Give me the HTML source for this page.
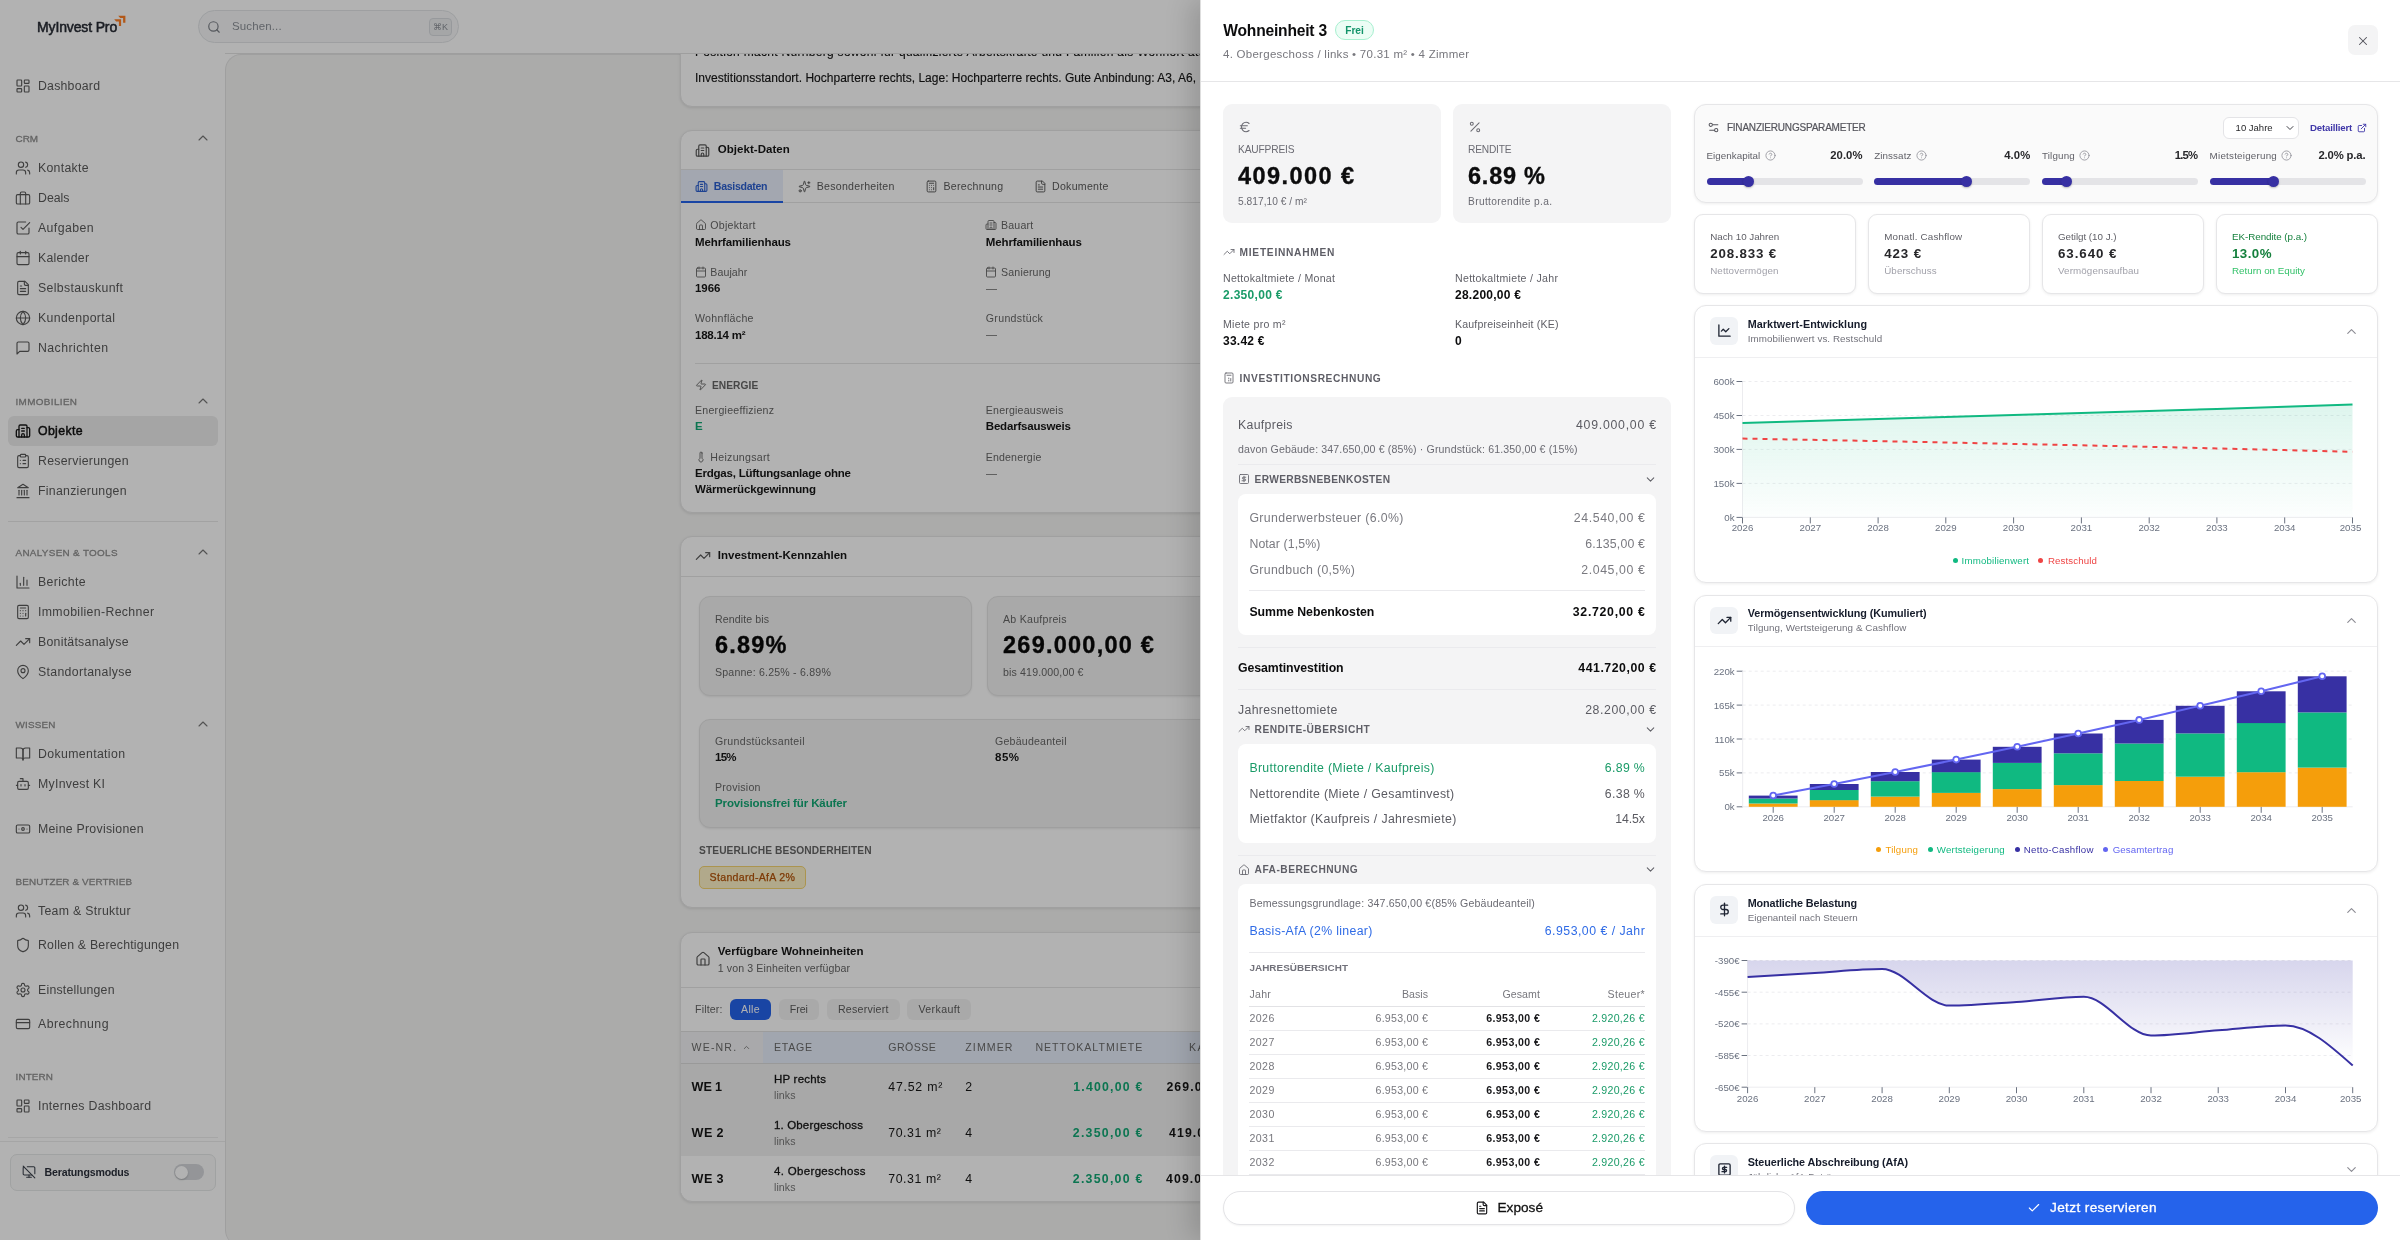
<!DOCTYPE html>
<html lang="de"><head><meta charset="utf-8"><title>MyInvest Pro – Wohneinheit 3</title><style>
html,body{margin:0;padding:0;}
body{width:2400px;height:1240px;overflow:hidden;background:#fff;font-family:"Liberation Sans", sans-serif;}
#app{position:relative;width:2400px;height:1240px;overflow:hidden;will-change:transform;}
.b{position:absolute;box-sizing:border-box;}
.t{position:absolute;white-space:nowrap;}
.i{position:absolute;display:block;}
svg text{font-family:"Liberation Sans", sans-serif;}
</style></head><body><div id="app">
<div id="bgpage" class="b" style="left:0;top:0;width:2400px;height:1240px;background:#fff;filter:blur(0.4px);">
<div class="b" style="left:225px;top:53.5px;width:2175px;height:1192px;background:#f5f5f4;border-radius:16px 0 0 16px;border-left:1px solid #e4e4e4;border-top:1px solid #e4e4e4;"></div>
<div class="b" style="left:679.5px;top:-40px;width:1500px;height:146.5px;background:#fff;border:1px solid #e6e6e6;border-radius:12px;box-shadow:0 1px 3px rgba(0,0,0,.10);"></div>
<span class="t" id="t0" style="top:43.2px;font-size:12px;line-height:18px;color:#161616;left:695px;letter-spacing:0.3px;-webkit-text-stroke:0.15px #161616;">Position macht Nürnberg sowohl für qualifizierte Arbeitskräfte und Familien als Wohnort attraktiv und sichert</span>
<span class="t" id="t1" style="top:69px;font-size:12px;line-height:18px;color:#161616;left:695px;letter-spacing:0.015px;-webkit-text-stroke:0.15px #161616;">Investitionsstandort. Hochparterre rechts, Lage: Hochparterre rechts. Gute Anbindung: A3, A6,</span>
<div class="b" style="left:679.5px;top:130px;width:1500px;height:383px;background:#fff;border:1px solid #e6e6e6;border-radius:12px;box-shadow:0 1px 3px rgba(0,0,0,.10);"></div>
<svg class="i" style="left:694.6px;top:142.7px;" width="15" height="15" viewBox="0 0 24 24" fill="none" stroke="#5b5b5b" stroke-width="1.9" stroke-linecap="round" stroke-linejoin="round"><path d="M10 12h4"/><path d="M10 8h4"/><path d="M14 21v-3a2 2 0 0 0-4 0v3"/><path d="M6 10H4a2 2 0 0 0-2 2v7a2 2 0 0 0 2 2h16a2 2 0 0 0 2-2V9a2 2 0 0 0-2-2h-2"/><path d="M6 21V5a2 2 0 0 1 2-2h8a2 2 0 0 1 2 2v16"/></svg>
<span class="t" id="t2" style="top:140.5px;font-size:11.5px;line-height:17px;color:#161616;font-weight:700;left:717.8px;letter-spacing:0.038px;">Objekt-Daten</span>
<div class="b" style="left:681px;top:169px;width:1499px;height:1px;background:#e6e6e6;"></div>
<div class="b" style="left:680.5px;top:170px;width:102.5px;height:33px;background:#eaf0fc;"></div>
<div class="b" style="left:681px;top:201px;width:102px;height:2px;background:#2563eb;"></div>
<div class="b" style="left:783px;top:202px;width:1397px;height:1px;background:#e6e6e6;"></div>
<svg class="i" style="left:694.5px;top:179.5px;" width="13" height="13" viewBox="0 0 24 24" fill="none" stroke="#2b5fd0" stroke-width="2" stroke-linecap="round" stroke-linejoin="round"><path d="M10 12h4"/><path d="M10 8h4"/><path d="M14 21v-3a2 2 0 0 0-4 0v3"/><path d="M6 10H4a2 2 0 0 0-2 2v7a2 2 0 0 0 2 2h16a2 2 0 0 0 2-2V9a2 2 0 0 0-2-2h-2"/><path d="M6 21V5a2 2 0 0 1 2-2h8a2 2 0 0 1 2 2v16"/></svg>
<span class="t" id="t3" style="top:178px;font-size:10.6px;line-height:16px;color:#2b5fd0;font-weight:700;left:713.8px;letter-spacing:-0.303px;">Basisdaten</span>
<svg class="i" style="left:798px;top:179.5px;" width="13" height="13" viewBox="0 0 24 24" fill="none" stroke="#5b5b5b" stroke-width="1.8" stroke-linecap="round" stroke-linejoin="round"><path d="M9.937 15.5A2 2 0 0 0 8.5 14.063l-6.135-1.582a.5.5 0 0 1 0-.962L8.5 9.936A2 2 0 0 0 9.937 8.5l1.582-6.135a.5.5 0 0 1 .963 0L14.063 8.5A2 2 0 0 0 15.5 9.937l6.135 1.581a.5.5 0 0 1 0 .964L15.5 14.063a2 2 0 0 0-1.437 1.437l-1.582 6.135a.5.5 0 0 1-.963 0z"/><path d="M20 3v4"/><path d="M22 5h-4"/><circle cx="4" cy="20" r="2"/></svg>
<span class="t" id="t4" style="top:178px;font-size:10.6px;line-height:16px;color:#5b5b5b;left:816.7px;letter-spacing:0.268px;">Besonderheiten</span>
<svg class="i" style="left:925px;top:179.5px;" width="13" height="13" viewBox="0 0 24 24" fill="none" stroke="#5b5b5b" stroke-width="1.8" stroke-linecap="round" stroke-linejoin="round"><rect width="16" height="20" x="4" y="2" rx="2"/><line x1="8" x2="16" y1="6" y2="6"/><line x1="16" x2="16" y1="14" y2="18"/><path d="M16 10h.01"/><path d="M12 10h.01"/><path d="M8 10h.01"/><path d="M12 14h.01"/><path d="M8 14h.01"/><path d="M12 18h.01"/><path d="M8 18h.01"/></svg>
<span class="t" id="t5" style="top:178px;font-size:10.6px;line-height:16px;color:#5b5b5b;left:943.5px;letter-spacing:0.284px;">Berechnung</span>
<svg class="i" style="left:1034px;top:179.5px;" width="13" height="13" viewBox="0 0 24 24" fill="none" stroke="#5b5b5b" stroke-width="1.8" stroke-linecap="round" stroke-linejoin="round"><path d="M15 2H6a2 2 0 0 0-2 2v16a2 2 0 0 0 2 2h12a2 2 0 0 0 2-2V7Z"/><path d="M14 2v4a2 2 0 0 0 2 2h4"/><path d="M10 9H8"/><path d="M16 13H8"/><path d="M16 17H8"/></svg>
<span class="t" id="t6" style="top:178px;font-size:10.6px;line-height:16px;color:#5b5b5b;left:1052px;letter-spacing:0.277px;">Dokumente</span>
<svg class="i" style="left:694.5px;top:219.3px;" width="12" height="12" viewBox="0 0 24 24" fill="none" stroke="#666" stroke-width="1.8" stroke-linecap="round" stroke-linejoin="round"><path d="M15 21v-8a1 1 0 0 0-1-1h-4a1 1 0 0 0-1 1v8"/><path d="M3 10a2 2 0 0 1 .709-1.528l7-5.999a2 2 0 0 1 2.582 0l7 5.999A2 2 0 0 1 21 10v9a2 2 0 0 1-2 2H5a2 2 0 0 1-2-2z"/></svg>
<span class="t" id="t7" style="top:217.3px;font-size:10.6px;line-height:16px;color:#666;left:710.3px;letter-spacing:0.264px;">Objektart</span>
<span class="t" id="t8" style="top:233.6px;font-size:11.5px;line-height:17px;color:#161616;font-weight:700;left:695px;letter-spacing:-0.119px;">Mehrfamilienhaus</span>
<svg class="i" style="left:985.3px;top:219.3px;" width="12" height="12" viewBox="0 0 24 24" fill="none" stroke="#666" stroke-width="1.8" stroke-linecap="round" stroke-linejoin="round"><path d="M10 12h4"/><path d="M10 8h4"/><path d="M14 21v-3a2 2 0 0 0-4 0v3"/><path d="M6 10H4a2 2 0 0 0-2 2v7a2 2 0 0 0 2 2h16a2 2 0 0 0 2-2V9a2 2 0 0 0-2-2h-2"/><path d="M6 21V5a2 2 0 0 1 2-2h8a2 2 0 0 1 2 2v16"/></svg>
<span class="t" id="t9" style="top:217.3px;font-size:10.6px;line-height:16px;color:#666;left:1001.1px;letter-spacing:0.156px;">Bauart</span>
<span class="t" id="t10" style="top:233.6px;font-size:11.5px;line-height:17px;color:#161616;font-weight:700;left:985.8px;letter-spacing:-0.119px;">Mehrfamilienhaus</span>
<svg class="i" style="left:694.5px;top:265.6px;" width="12" height="12" viewBox="0 0 24 24" fill="none" stroke="#666" stroke-width="1.8" stroke-linecap="round" stroke-linejoin="round"><path d="M8 2v4"/><path d="M16 2v4"/><rect width="18" height="18" x="3" y="4" rx="2"/><path d="M3 10h18"/></svg>
<span class="t" id="t11" style="top:263.6px;font-size:10.6px;line-height:16px;color:#666;left:710.3px;letter-spacing:0.081px;">Baujahr</span>
<span class="t" id="t12" style="top:279.9px;font-size:11.5px;line-height:17px;color:#161616;font-weight:700;left:695px;letter-spacing:-0.031px;">1966</span>
<svg class="i" style="left:985.3px;top:265.6px;" width="12" height="12" viewBox="0 0 24 24" fill="none" stroke="#666" stroke-width="1.8" stroke-linecap="round" stroke-linejoin="round"><path d="M8 2v4"/><path d="M16 2v4"/><rect width="18" height="18" x="3" y="4" rx="2"/><path d="M3 10h18"/></svg>
<span class="t" id="t13" style="top:263.6px;font-size:10.6px;line-height:16px;color:#666;left:1001.1px;letter-spacing:0.148px;">Sanierung</span>
<div class="b" style="left:985.8px;top:288.6px;width:11px;height:1px;background:#8a8a8a;"></div>
<span class="t" id="t14" style="top:310.2px;font-size:10.6px;line-height:16px;color:#666;left:695px;letter-spacing:0.304px;">Wohnfläche</span>
<span class="t" id="t15" style="top:326.5px;font-size:11.5px;line-height:17px;color:#161616;font-weight:700;left:695px;letter-spacing:-0.242px;">188.14 m²</span>
<span class="t" id="t16" style="top:310.2px;font-size:10.6px;line-height:16px;color:#666;left:985.8px;letter-spacing:0.314px;">Grundstück</span>
<div class="b" style="left:985.8px;top:335.2px;width:11px;height:1px;background:#8a8a8a;"></div>
<div class="b" style="left:695px;top:362.5px;width:1485px;height:1px;background:#e6e6e6;"></div>
<svg class="i" style="left:694.5px;top:379px;" width="12" height="12" viewBox="0 0 24 24" fill="none" stroke="#666" stroke-width="1.8" stroke-linecap="round" stroke-linejoin="round"><path d="M4 14a1 1 0 0 1-.78-1.63l9.9-10.2a.5.5 0 0 1 .86.46l-1.92 6.02A1 1 0 0 0 13 10h7a1 1 0 0 1 .78 1.63l-9.9 10.2a.5.5 0 0 1-.86-.46l1.92-6.02A1 1 0 0 0 11 14z"/></svg>
<span class="t" id="t17" style="top:377.5px;font-size:10.2px;line-height:15px;color:#666;font-weight:700;left:712px;letter-spacing:0.057px;">ENERGIE</span>
<span class="t" id="t18" style="top:402px;font-size:10.6px;line-height:16px;color:#666;left:695px;letter-spacing:0.254px;">Energieeffizienz</span>
<span class="t" id="t19" style="top:418.3px;font-size:11.5px;line-height:17px;color:#12a874;font-weight:700;left:695px;">E</span>
<span class="t" id="t20" style="top:402px;font-size:10.6px;line-height:16px;color:#666;left:985.8px;letter-spacing:0.200px;">Energieausweis</span>
<span class="t" id="t21" style="top:418.3px;font-size:11.5px;line-height:17px;color:#161616;font-weight:700;left:985.8px;letter-spacing:-0.198px;">Bedarfsausweis</span>
<svg class="i" style="left:694.5px;top:450.7px;" width="12" height="12" viewBox="0 0 24 24" fill="none" stroke="#666" stroke-width="1.8" stroke-linecap="round" stroke-linejoin="round"><path d="M14 4v10.54a4 4 0 1 1-4 0V4a2 2 0 0 1 4 0Z"/></svg>
<span class="t" id="t22" style="top:448.7px;font-size:10.6px;line-height:16px;color:#666;left:710.3px;letter-spacing:0.297px;">Heizungsart</span>
<span class="t" id="t23" style="top:465px;font-size:11.5px;line-height:17px;color:#161616;font-weight:700;left:695px;letter-spacing:-0.218px;">Erdgas, Lüftungsanlage ohne</span>
<span class="t" id="t24" style="top:480.5px;font-size:11.5px;line-height:17px;color:#161616;font-weight:700;left:695px;letter-spacing:-0.137px;">Wärmerückgewinnung</span>
<span class="t" id="t25" style="top:448.7px;font-size:10.6px;line-height:16px;color:#666;left:985.8px;letter-spacing:0.144px;">Endenergie</span>
<div class="b" style="left:985.8px;top:473.7px;width:11px;height:1px;background:#8a8a8a;"></div>
<div class="b" style="left:679.5px;top:536px;width:1500px;height:372px;background:#fff;border:1px solid #e6e6e6;border-radius:12px;box-shadow:0 1px 3px rgba(0,0,0,.10);"></div>
<svg class="i" style="left:695px;top:548px;" width="16" height="16" viewBox="0 0 24 24" fill="none" stroke="#5b5b5b" stroke-width="1.8" stroke-linecap="round" stroke-linejoin="round"><polyline points="22 7 13.5 15.5 8.5 10.5 2 17"/><polyline points="16 7 22 7 22 13"/></svg>
<span class="t" id="t26" style="top:547.1px;font-size:11.5px;line-height:17px;color:#161616;font-weight:700;left:717.8px;letter-spacing:0.011px;">Investment-Kennzahlen</span>
<div class="b" style="left:681px;top:576px;width:1499px;height:1px;background:#e6e6e6;"></div>
<div class="b" style="left:699px;top:595.5px;width:272.5px;height:100px;background:#f3f3f3;border:1px solid #e4e4e4;border-radius:11px;box-shadow:0 1px 2px rgba(0,0,0,.08);"></div>
<div class="b" style="left:987px;top:595.5px;width:272.5px;height:100px;background:#f3f3f3;border:1px solid #e4e4e4;border-radius:11px;box-shadow:0 1px 2px rgba(0,0,0,.08);"></div>
<span class="t" id="t27" style="top:610.7px;font-size:10.6px;line-height:16px;color:#666;left:715px;letter-spacing:0.100px;">Rendite bis</span>
<span class="t" id="t28" style="top:627.9px;font-size:23.5px;line-height:35px;color:#0a0a0a;font-weight:700;left:715px;letter-spacing:1.165px;-webkit-text-stroke:0.35px #0a0a0a;">6.89%</span>
<span class="t" id="t29" style="top:663.8px;font-size:10.6px;line-height:16px;color:#666;left:715px;letter-spacing:0.195px;">Spanne: 6.25% - 6.89%</span>
<span class="t" id="t30" style="top:610.7px;font-size:10.6px;line-height:16px;color:#666;left:1003px;letter-spacing:0.259px;">Ab Kaufpreis</span>
<span class="t" id="t31" style="top:627.9px;font-size:23.5px;line-height:35px;color:#0a0a0a;font-weight:700;left:1003px;letter-spacing:1.244px;-webkit-text-stroke:0.35px #0a0a0a;">269.000,00 €</span>
<span class="t" id="t32" style="top:663.8px;font-size:10.6px;line-height:16px;color:#666;left:1003px;letter-spacing:0.144px;">bis 419.000,00 €</span>
<div class="b" style="left:699px;top:718.5px;width:1400px;height:109px;background:#f3f3f3;border:1px solid #e4e4e4;border-radius:11px;box-shadow:0 1px 2px rgba(0,0,0,.08);"></div>
<span class="t" id="t33" style="top:732.8px;font-size:10.6px;line-height:16px;color:#666;left:715px;letter-spacing:0.294px;">Grundstücksanteil</span>
<span class="t" id="t34" style="top:748.7px;font-size:11.5px;line-height:17px;color:#161616;font-weight:700;left:715px;letter-spacing:-0.766px;">15%</span>
<span class="t" id="t35" style="top:732.8px;font-size:10.6px;line-height:16px;color:#666;left:995px;letter-spacing:0.215px;">Gebäudeanteil</span>
<span class="t" id="t36" style="top:748.7px;font-size:11.5px;line-height:17px;color:#161616;font-weight:700;left:995px;letter-spacing:0.484px;">85%</span>
<span class="t" id="t37" style="top:778.7px;font-size:10.6px;line-height:16px;color:#666;left:715px;letter-spacing:0.240px;">Provision</span>
<span class="t" id="t38" style="top:795.2px;font-size:11.5px;line-height:17px;color:#12a874;font-weight:700;left:715px;letter-spacing:-0.118px;">Provisionsfrei für Käufer</span>
<span class="t" id="t39" style="top:842.9px;font-size:10.2px;line-height:15px;color:#666;font-weight:700;left:699px;letter-spacing:0.111px;">STEUERLICHE BESONDERHEITEN</span>
<div class="b" style="left:699px;top:866px;width:107px;height:22.5px;background:#fef3c7;border:1px solid #f5d572;border-radius:5px;"></div>
<span class="t" id="t40" style="top:869.3px;font-size:10.6px;line-height:16px;color:#b45309;left:709.6px;letter-spacing:0.294px;-webkit-text-stroke:0.25px #b45309;">Standard-AfA 2%</span>
<div class="b" style="left:680px;top:932px;width:1500px;height:270px;background:#fff;border:1px solid #e6e6e6;border-radius:12px;box-shadow:0 1px 3px rgba(0,0,0,.10);overflow:hidden;"></div>
<svg class="i" style="left:695px;top:951px;" width="16" height="16" viewBox="0 0 24 24" fill="none" stroke="#5b5b5b" stroke-width="1.8" stroke-linecap="round" stroke-linejoin="round"><path d="M15 21v-8a1 1 0 0 0-1-1h-4a1 1 0 0 0-1 1v8"/><path d="M3 10a2 2 0 0 1 .709-1.528l7-5.999a2 2 0 0 1 2.582 0l7 5.999A2 2 0 0 1 21 10v9a2 2 0 0 1-2 2H5a2 2 0 0 1-2-2z"/></svg>
<span class="t" id="t41" style="top:942.5px;font-size:11.5px;line-height:17px;color:#161616;font-weight:700;left:717.8px;letter-spacing:0.009px;">Verfügbare Wohneinheiten</span>
<span class="t" id="t42" style="top:960.3px;font-size:10.6px;line-height:16px;color:#666;left:717.8px;letter-spacing:0.101px;">1 von 3 Einheiten verfügbar</span>
<div class="b" style="left:681px;top:986.5px;width:1499px;height:1px;background:#e6e6e6;"></div>
<span class="t" id="t43" style="top:1001px;font-size:10.6px;line-height:16px;color:#666;left:695px;letter-spacing:0.169px;">Filter:</span>
<div class="b" style="left:729.7px;top:998.5px;width:41.2px;height:21px;background:#2563eb;border-radius:6px;"></div>
<span class="t" id="t44" style="top:1001px;font-size:10.6px;line-height:16px;color:#fff;left:741.05px;letter-spacing:0.276px;">Alle</span>
<div class="b" style="left:778.6px;top:998.5px;width:40.4px;height:21px;background:#f3f3f3;border-radius:6px;"></div>
<span class="t" id="t45" style="top:1001px;font-size:10.6px;line-height:16px;color:#5b5b5b;left:789.65px;letter-spacing:0.017px;">Frei</span>
<div class="b" style="left:826.5px;top:998.5px;width:73.3px;height:21px;background:#f3f3f3;border-radius:6px;"></div>
<span class="t" id="t46" style="top:1001px;font-size:10.6px;line-height:16px;color:#5b5b5b;left:837.95px;letter-spacing:0.247px;">Reserviert</span>
<div class="b" style="left:907.3px;top:998.5px;width:63.7px;height:21px;background:#f3f3f3;border-radius:6px;"></div>
<span class="t" id="t47" style="top:1001px;font-size:10.6px;line-height:16px;color:#5b5b5b;left:918.45px;letter-spacing:0.375px;">Verkauft</span>
<div class="b" style="left:681px;top:1031px;width:1498px;height:32.5px;background:#e7eefb;"></div>
<div class="b" style="left:681px;top:1031px;width:81.5px;height:32.5px;background:#f3f3f5;"></div>
<div class="b" style="left:681px;top:1031px;width:1499px;height:1px;background:#e0e0e0;"></div>
<div class="b" style="left:681px;top:1063px;width:1499px;height:1px;background:#dcdcdc;"></div>
<span class="t" id="t48" style="top:1039.4px;font-size:10.6px;line-height:16px;color:#6a6a6a;left:691.6px;letter-spacing:1.131px;">WE-NR.</span>
<svg class="i" style="left:742px;top:1043px;" width="9" height="9" viewBox="0 0 24 24" fill="none" stroke="#6a6a6a" stroke-width="2" stroke-linecap="round" stroke-linejoin="round"><path d="m18 15-6-6-6 6"/></svg>
<span class="t" id="t49" style="top:1039.4px;font-size:10.6px;line-height:16px;color:#6a6a6a;left:774px;letter-spacing:0.719px;">ETAGE</span>
<span class="t" id="t50" style="top:1039.4px;font-size:10.6px;line-height:16px;color:#6a6a6a;left:888.3px;letter-spacing:0.431px;">GRÖSSE</span>
<span class="t" id="t51" style="top:1039.4px;font-size:10.6px;line-height:16px;color:#6a6a6a;left:965.3px;letter-spacing:1.084px;">ZIMMER</span>
<span class="t" id="t52" style="top:1039.4px;font-size:10.6px;line-height:16px;color:#6a6a6a;left:1035.4px;letter-spacing:1.008px;">NETTOKALTMIETE</span>
<span class="t" id="t53" style="top:1039.4px;font-size:10.6px;line-height:16px;color:#6a6a6a;left:1189px;letter-spacing:1.5px;">KAUFPREIS</span>
<div class="b" style="left:681px;top:1064px;width:1498px;height:46.2px;background:#f1f1f1;"></div>
<div class="b" style="left:681px;top:1109.7px;width:1499px;height:1px;background:#e2e2e2;"></div>
<span class="t" id="t54" style="top:1077.5px;font-size:12.6px;line-height:19px;color:#161616;font-weight:700;left:691.6px;letter-spacing:-0.099px;">WE 1</span>
<span class="t" id="t55" style="top:1071px;font-size:11.5px;line-height:17px;color:#161616;left:774px;letter-spacing:0.215px;-webkit-text-stroke:0.3px #161616;">HP rechts</span>
<span class="t" id="t56" style="top:1087.3px;font-size:10.6px;line-height:16px;color:#777;left:774px;letter-spacing:0.074px;">links</span>
<span class="t" id="t57" style="top:1078px;font-size:12.3px;line-height:18px;color:#161616;left:888.3px;letter-spacing:0.781px;">47.52 m²</span>
<span class="t" id="t58" style="top:1078px;font-size:12.3px;line-height:18px;color:#161616;left:965.3px;">2</span>
<span class="t" id="t59" style="top:1078px;font-size:12.3px;line-height:18px;color:#12a874;font-weight:700;left:1073.3px;letter-spacing:1.208px;">1.400,00 €</span>
<span class="t" id="t60" style="top:1078px;font-size:12.3px;line-height:18px;color:#161616;font-weight:700;left:1166.4px;letter-spacing:1.1px;">269.000,00 €</span>
<div class="b" style="left:681px;top:1110.2px;width:1498px;height:46.2px;background:#f1f1f1;"></div>
<div class="b" style="left:681px;top:1155.9px;width:1499px;height:1px;background:#e2e2e2;"></div>
<span class="t" id="t61" style="top:1123.5px;font-size:12.6px;line-height:19px;color:#161616;font-weight:700;left:691.6px;letter-spacing:0.401px;">WE 2</span>
<span class="t" id="t62" style="top:1117px;font-size:11.5px;line-height:17px;color:#161616;left:774px;letter-spacing:0.147px;-webkit-text-stroke:0.3px #161616;">1. Obergeschoss</span>
<span class="t" id="t63" style="top:1133.3px;font-size:10.6px;line-height:16px;color:#777;left:774px;letter-spacing:0.074px;">links</span>
<span class="t" id="t64" style="top:1124px;font-size:12.3px;line-height:18px;color:#161616;left:888.3px;letter-spacing:0.567px;">70.31 m²</span>
<span class="t" id="t65" style="top:1124px;font-size:12.3px;line-height:18px;color:#161616;left:965.3px;">4</span>
<span class="t" id="t66" style="top:1124px;font-size:12.3px;line-height:18px;color:#12a874;font-weight:700;left:1072.8px;letter-spacing:1.264px;">2.350,00 €</span>
<span class="t" id="t67" style="top:1124px;font-size:12.3px;line-height:18px;color:#161616;font-weight:700;left:1169px;letter-spacing:1.1px;">419.000,00 €</span>
<div class="b" style="left:681px;top:1156.4px;width:1498px;height:37px;background:#fff;"></div>
<span class="t" id="t68" style="top:1169.5px;font-size:12.6px;line-height:19px;color:#161616;font-weight:700;left:691.6px;letter-spacing:0.401px;">WE 3</span>
<span class="t" id="t69" style="top:1163px;font-size:11.5px;line-height:17px;color:#161616;left:774px;letter-spacing:0.326px;-webkit-text-stroke:0.3px #161616;">4. Obergeschoss</span>
<span class="t" id="t70" style="top:1179.3px;font-size:10.6px;line-height:16px;color:#777;left:774px;letter-spacing:0.074px;">links</span>
<span class="t" id="t71" style="top:1170px;font-size:12.3px;line-height:18px;color:#161616;left:888.3px;letter-spacing:0.567px;">70.31 m²</span>
<span class="t" id="t72" style="top:1170px;font-size:12.3px;line-height:18px;color:#161616;left:965.3px;">4</span>
<span class="t" id="t73" style="top:1170px;font-size:12.3px;line-height:18px;color:#12a874;font-weight:700;left:1072.8px;letter-spacing:1.264px;">2.350,00 €</span>
<span class="t" id="t74" style="top:1170px;font-size:12.3px;line-height:18px;color:#161616;font-weight:700;left:1166px;letter-spacing:1.1px;">409.000,00 €</span>
<div class="b" style="left:0px;top:0px;width:2400px;height:54px;background:#fff;border-bottom:1px solid #e2e2e2;"></div>
<span class="t" id="t75" style="top:16.9px;font-size:14px;line-height:21px;color:#262a33;left:37px;letter-spacing:-0.137px;-webkit-text-stroke:0.5px #262a33;">MyInvest Pro</span>
<svg class="i" style="left:110px;top:10px" width="20" height="20" viewBox="110 10 20 20" fill="#ff7f24"><path d="M118.200 15.700H125.400V22.800H123.100V18H120.200Z"/><path d="M114.200 19.300H121.100V26.100H118.900V21.400H116.100Z"/></svg>
<div class="b" style="left:198px;top:10px;width:261px;height:32.5px;background:#f6f7f8;border:1px solid #e2e4e7;border-radius:17px;"></div>
<svg class="i" style="left:207px;top:19.5px;" width="14" height="14" viewBox="0 0 24 24" fill="none" stroke="#7b7f86" stroke-width="2" stroke-linecap="round" stroke-linejoin="round"><circle cx="11" cy="11" r="8"/><path d="m21 21-4.3-4.3"/></svg>
<span class="t" id="t76" style="top:17.9px;font-size:11.5px;line-height:17px;color:#8c9097;left:232px;letter-spacing:0.126px;">Suchen...</span>
<div class="b" style="left:429px;top:17.6px;width:23px;height:18px;background:#eceef0;border:1px solid #d9dce0;border-radius:4px;"></div>
<span class="t" id="t77" style="top:19.6px;font-size:9px;line-height:14px;color:#8c9097;left:433px;letter-spacing:-0.016px;font-family:"DejaVu Sans","Liberation Sans",sans-serif;">⌘K</span>
<div class="b" style="left:0px;top:53px;width:225px;height:1187px;background:#fff;"></div>
<svg class="i" style="left:15px;top:78.4px;" width="16" height="16" viewBox="0 0 24 24" fill="none" stroke="#5a5a5a" stroke-width="1.7" stroke-linecap="round" stroke-linejoin="round"><rect width="7" height="9" x="3" y="3" rx="1"/><rect width="7" height="5" x="14" y="3" rx="1"/><rect width="7" height="9" x="14" y="12" rx="1"/><rect width="7" height="5" x="3" y="16" rx="1"/></svg>
<span class="t" id="t78" style="top:77.4px;font-size:12.3px;line-height:18px;color:#5a5a5a;left:38px;letter-spacing:0.229px;">Dashboard</span>
<span class="t" id="t79" style="top:130.5px;font-size:9.9px;line-height:15px;color:#8f8f8f;left:15.5px;letter-spacing:0.000px;-webkit-text-stroke:0.3px #8f8f8f;">CRM</span>
<svg class="i" style="left:195px;top:130px;" width="16" height="16" viewBox="0 0 24 24" fill="none" stroke="#777" stroke-width="1.6" stroke-linecap="round" stroke-linejoin="round"><path d="m18 15-6-6-6 6"/></svg>
<svg class="i" style="left:15px;top:160.4px;" width="16" height="16" viewBox="0 0 24 24" fill="none" stroke="#5a5a5a" stroke-width="1.7" stroke-linecap="round" stroke-linejoin="round"><path d="M16 21v-2a4 4 0 0 0-4-4H6a4 4 0 0 0-4 4v2"/><circle cx="9" cy="7" r="4"/><path d="M22 21v-2a4 4 0 0 0-3-3.87"/><path d="M16 3.13a4 4 0 0 1 0 7.75"/></svg>
<span class="t" id="t80" style="top:159.4px;font-size:12.3px;line-height:18px;color:#5a5a5a;left:38px;letter-spacing:0.279px;">Kontakte</span>
<svg class="i" style="left:15px;top:190.4px;" width="16" height="16" viewBox="0 0 24 24" fill="none" stroke="#5a5a5a" stroke-width="1.7" stroke-linecap="round" stroke-linejoin="round"><rect width="20" height="14" x="2" y="7" rx="2" ry="2"/><path d="M16 21V5a2 2 0 0 0-2-2h-4a2 2 0 0 0-2 2v16"/></svg>
<span class="t" id="t81" style="top:189.4px;font-size:12.3px;line-height:18px;color:#5a5a5a;left:38px;letter-spacing:0.012px;">Deals</span>
<svg class="i" style="left:15px;top:220.4px;" width="16" height="16" viewBox="0 0 24 24" fill="none" stroke="#5a5a5a" stroke-width="1.7" stroke-linecap="round" stroke-linejoin="round"><path d="m9 11 3 3L22 4"/><path d="M21 12v7a2 2 0 0 1-2 2H5a2 2 0 0 1-2-2V5a2 2 0 0 1 2-2h11"/></svg>
<span class="t" id="t82" style="top:219.4px;font-size:12.3px;line-height:18px;color:#5a5a5a;left:38px;letter-spacing:0.406px;">Aufgaben</span>
<svg class="i" style="left:15px;top:250.4px;" width="16" height="16" viewBox="0 0 24 24" fill="none" stroke="#5a5a5a" stroke-width="1.7" stroke-linecap="round" stroke-linejoin="round"><path d="M8 2v4"/><path d="M16 2v4"/><rect width="18" height="18" x="3" y="4" rx="2"/><path d="M3 10h18"/></svg>
<span class="t" id="t83" style="top:249.4px;font-size:12.3px;line-height:18px;color:#5a5a5a;left:38px;letter-spacing:0.252px;">Kalender</span>
<svg class="i" style="left:15px;top:280.4px;" width="16" height="16" viewBox="0 0 24 24" fill="none" stroke="#5a5a5a" stroke-width="1.7" stroke-linecap="round" stroke-linejoin="round"><path d="M15 2H6a2 2 0 0 0-2 2v16a2 2 0 0 0 2 2h12a2 2 0 0 0 2-2V7Z"/><path d="M14 2v4a2 2 0 0 0 2 2h4"/><path d="M10 9H8"/><path d="M16 13H8"/><path d="M16 17H8"/></svg>
<span class="t" id="t84" style="top:279.4px;font-size:12.3px;line-height:18px;color:#5a5a5a;left:38px;letter-spacing:0.333px;">Selbstauskunft</span>
<svg class="i" style="left:15px;top:310.4px;" width="16" height="16" viewBox="0 0 24 24" fill="none" stroke="#5a5a5a" stroke-width="1.7" stroke-linecap="round" stroke-linejoin="round"><circle cx="12" cy="12" r="10"/><path d="M12 2a14.5 14.5 0 0 0 0 20 14.5 14.5 0 0 0 0-20"/><path d="M2 12h20"/></svg>
<span class="t" id="t85" style="top:309.4px;font-size:12.3px;line-height:18px;color:#5a5a5a;left:38px;letter-spacing:0.348px;">Kundenportal</span>
<svg class="i" style="left:15px;top:340.4px;" width="16" height="16" viewBox="0 0 24 24" fill="none" stroke="#5a5a5a" stroke-width="1.7" stroke-linecap="round" stroke-linejoin="round"><path d="M21 15a2 2 0 0 1-2 2H7l-4 4V5a2 2 0 0 1 2-2h14a2 2 0 0 1 2 2z"/></svg>
<span class="t" id="t86" style="top:339.4px;font-size:12.3px;line-height:18px;color:#5a5a5a;left:38px;letter-spacing:0.438px;">Nachrichten</span>
<span class="t" id="t87" style="top:393.5px;font-size:9.9px;line-height:15px;color:#8f8f8f;left:15.5px;letter-spacing:0.370px;-webkit-text-stroke:0.3px #8f8f8f;">IMMOBILIEN</span>
<svg class="i" style="left:195px;top:393px;" width="16" height="16" viewBox="0 0 24 24" fill="none" stroke="#777" stroke-width="1.6" stroke-linecap="round" stroke-linejoin="round"><path d="m18 15-6-6-6 6"/></svg>
<div class="b" style="left:8px;top:415.5px;width:210px;height:30px;background:#ececec;border-radius:6px;"></div>
<svg class="i" style="left:15px;top:423.4px;" width="16" height="16" viewBox="0 0 24 24" fill="none" stroke="#1a1a1a" stroke-width="2" stroke-linecap="round" stroke-linejoin="round"><path d="M10 12h4"/><path d="M10 8h4"/><path d="M14 21v-3a2 2 0 0 0-4 0v3"/><path d="M6 10H4a2 2 0 0 0-2 2v7a2 2 0 0 0 2 2h16a2 2 0 0 0 2-2V9a2 2 0 0 0-2-2h-2"/><path d="M6 21V5a2 2 0 0 1 2-2h8a2 2 0 0 1 2 2v16"/></svg>
<span class="t" id="t88" style="top:422.4px;font-size:12.3px;line-height:18px;color:#111;left:38px;letter-spacing:0.352px;-webkit-text-stroke:0.45px #111;">Objekte</span>
<svg class="i" style="left:15px;top:453.4px;" width="16" height="16" viewBox="0 0 24 24" fill="none" stroke="#5a5a5a" stroke-width="1.7" stroke-linecap="round" stroke-linejoin="round"><rect width="8" height="4" x="8" y="2" rx="1" ry="1"/><path d="M16 4h2a2 2 0 0 1 2 2v14a2 2 0 0 1-2 2H6a2 2 0 0 1-2-2V6a2 2 0 0 1 2-2h2"/><path d="M12 11h4"/><path d="M12 16h4"/><path d="M8 11h.01"/><path d="M8 16h.01"/></svg>
<span class="t" id="t89" style="top:452.4px;font-size:12.3px;line-height:18px;color:#5a5a5a;left:38px;letter-spacing:0.284px;">Reservierungen</span>
<svg class="i" style="left:15px;top:483.4px;" width="16" height="16" viewBox="0 0 24 24" fill="none" stroke="#5a5a5a" stroke-width="1.7" stroke-linecap="round" stroke-linejoin="round"><line x1="3" x2="21" y1="22" y2="22"/><line x1="6" x2="6" y1="18" y2="11"/><line x1="10" x2="10" y1="18" y2="11"/><line x1="14" x2="14" y1="18" y2="11"/><line x1="18" x2="18" y1="18" y2="11"/><polygon points="12 2 20 7 4 7"/></svg>
<span class="t" id="t90" style="top:482.4px;font-size:12.3px;line-height:18px;color:#5a5a5a;left:38px;letter-spacing:0.286px;">Finanzierungen</span>
<div class="b" style="left:8px;top:521px;width:210px;height:1px;background:#e8e8e8;"></div>
<span class="t" id="t91" style="top:544.5px;font-size:9.9px;line-height:15px;color:#8f8f8f;left:15.5px;letter-spacing:0.323px;-webkit-text-stroke:0.3px #8f8f8f;">ANALYSEN &amp; TOOLS</span>
<svg class="i" style="left:195px;top:544px;" width="16" height="16" viewBox="0 0 24 24" fill="none" stroke="#777" stroke-width="1.6" stroke-linecap="round" stroke-linejoin="round"><path d="m18 15-6-6-6 6"/></svg>
<svg class="i" style="left:15px;top:574.4px;" width="16" height="16" viewBox="0 0 24 24" fill="none" stroke="#5a5a5a" stroke-width="1.7" stroke-linecap="round" stroke-linejoin="round"><path d="M3 3v18h18"/><path d="M18 17V9"/><path d="M13 17V5"/><path d="M8 17v-3"/></svg>
<span class="t" id="t92" style="top:573.4px;font-size:12.3px;line-height:18px;color:#5a5a5a;left:38px;letter-spacing:0.339px;">Berichte</span>
<svg class="i" style="left:15px;top:604.4px;" width="16" height="16" viewBox="0 0 24 24" fill="none" stroke="#5a5a5a" stroke-width="1.7" stroke-linecap="round" stroke-linejoin="round"><rect width="16" height="20" x="4" y="2" rx="2"/><line x1="8" x2="16" y1="6" y2="6"/><line x1="16" x2="16" y1="14" y2="18"/><path d="M16 10h.01"/><path d="M12 10h.01"/><path d="M8 10h.01"/><path d="M12 14h.01"/><path d="M8 14h.01"/><path d="M12 18h.01"/><path d="M8 18h.01"/></svg>
<span class="t" id="t93" style="top:603.4px;font-size:12.3px;line-height:18px;color:#5a5a5a;left:38px;letter-spacing:0.351px;">Immobilien-Rechner</span>
<svg class="i" style="left:15px;top:634.4px;" width="16" height="16" viewBox="0 0 24 24" fill="none" stroke="#5a5a5a" stroke-width="1.7" stroke-linecap="round" stroke-linejoin="round"><polyline points="22 7 13.5 15.5 8.5 10.5 2 17"/><polyline points="16 7 22 7 22 13"/></svg>
<span class="t" id="t94" style="top:633.4px;font-size:12.3px;line-height:18px;color:#5a5a5a;left:38px;letter-spacing:0.262px;">Bonitätsanalyse</span>
<svg class="i" style="left:15px;top:664.4px;" width="16" height="16" viewBox="0 0 24 24" fill="none" stroke="#5a5a5a" stroke-width="1.7" stroke-linecap="round" stroke-linejoin="round"><path d="M20 10c0 6-8 12-8 12s-8-6-8-12a8 8 0 0 1 16 0Z"/><circle cx="12" cy="10" r="3"/></svg>
<span class="t" id="t95" style="top:663.4px;font-size:12.3px;line-height:18px;color:#5a5a5a;left:38px;letter-spacing:0.330px;">Standortanalyse</span>
<span class="t" id="t96" style="top:716.5px;font-size:9.9px;line-height:15px;color:#8f8f8f;left:15.5px;letter-spacing:0.206px;-webkit-text-stroke:0.3px #8f8f8f;">WISSEN</span>
<svg class="i" style="left:195px;top:716px;" width="16" height="16" viewBox="0 0 24 24" fill="none" stroke="#777" stroke-width="1.6" stroke-linecap="round" stroke-linejoin="round"><path d="m18 15-6-6-6 6"/></svg>
<svg class="i" style="left:15px;top:746.4px;" width="16" height="16" viewBox="0 0 24 24" fill="none" stroke="#5a5a5a" stroke-width="1.7" stroke-linecap="round" stroke-linejoin="round"><path d="M2 3h6a4 4 0 0 1 4 4v14a3 3 0 0 0-3-3H2z"/><path d="M22 3h-6a4 4 0 0 0-4 4v14a3 3 0 0 1 3-3h7z"/></svg>
<span class="t" id="t97" style="top:745.4px;font-size:12.3px;line-height:18px;color:#5a5a5a;left:38px;letter-spacing:0.357px;">Dokumentation</span>
<svg class="i" style="left:15px;top:776.4px;" width="16" height="16" viewBox="0 0 24 24" fill="none" stroke="#5a5a5a" stroke-width="1.7" stroke-linecap="round" stroke-linejoin="round"><path d="M12 8V4H8"/><rect width="16" height="12" x="4" y="8" rx="2"/><path d="M2 14h2"/><path d="M20 14h2"/><path d="M15 13v2"/><path d="M9 13v2"/></svg>
<span class="t" id="t98" style="top:775.4px;font-size:12.3px;line-height:18px;color:#5a5a5a;left:38px;letter-spacing:0.275px;">MyInvest KI</span>
<svg class="i" style="left:15px;top:821.4px;" width="16" height="16" viewBox="0 0 24 24" fill="none" stroke="#5a5a5a" stroke-width="1.7" stroke-linecap="round" stroke-linejoin="round"><rect width="20" height="12" x="2" y="6" rx="2"/><circle cx="12" cy="12" r="2"/><path d="M6 12h.01M18 12h.01"/></svg>
<span class="t" id="t99" style="top:820.4px;font-size:12.3px;line-height:18px;color:#5a5a5a;left:38px;letter-spacing:0.271px;">Meine Provisionen</span>
<span class="t" id="t100" style="top:873.5px;font-size:9.9px;line-height:15px;color:#8f8f8f;left:15.5px;letter-spacing:0.111px;-webkit-text-stroke:0.3px #8f8f8f;">BENUTZER &amp; VERTRIEB</span>
<svg class="i" style="left:15px;top:903.4px;" width="16" height="16" viewBox="0 0 24 24" fill="none" stroke="#5a5a5a" stroke-width="1.7" stroke-linecap="round" stroke-linejoin="round"><path d="M16 21v-2a4 4 0 0 0-4-4H6a4 4 0 0 0-4 4v2"/><circle cx="9" cy="7" r="4"/><path d="M22 21v-2a4 4 0 0 0-3-3.87"/><path d="M16 3.13a4 4 0 0 1 0 7.75"/></svg>
<span class="t" id="t101" style="top:902.4px;font-size:12.3px;line-height:18px;color:#5a5a5a;left:38px;letter-spacing:0.310px;">Team &amp; Struktur</span>
<svg class="i" style="left:15px;top:937.4px;" width="16" height="16" viewBox="0 0 24 24" fill="none" stroke="#5a5a5a" stroke-width="1.7" stroke-linecap="round" stroke-linejoin="round"><path d="M20 13c0 5-3.5 7.5-7.66 8.95a1 1 0 0 1-.67-.01C7.5 20.5 4 18 4 13V6a1 1 0 0 1 1-1c2 0 4.5-1.2 6.24-2.72a1.17 1.17 0 0 1 1.52 0C14.51 3.81 17 5 19 5a1 1 0 0 1 1 1z"/></svg>
<span class="t" id="t102" style="top:936.4px;font-size:12.3px;line-height:18px;color:#5a5a5a;left:38px;letter-spacing:0.225px;">Rollen &amp; Berechtigungen</span>
<svg class="i" style="left:15px;top:982.4px;" width="16" height="16" viewBox="0 0 24 24" fill="none" stroke="#5a5a5a" stroke-width="1.7" stroke-linecap="round" stroke-linejoin="round"><path d="M12.22 2h-.44a2 2 0 0 0-2 2v.18a2 2 0 0 1-1 1.73l-.43.25a2 2 0 0 1-2 0l-.15-.08a2 2 0 0 0-2.73.73l-.22.38a2 2 0 0 0 .73 2.73l.15.1a2 2 0 0 1 1 1.72v.51a2 2 0 0 1-1 1.74l-.15.09a2 2 0 0 0-.73 2.73l.22.38a2 2 0 0 0 2.73.73l.15-.08a2 2 0 0 1 2 0l.43.25a2 2 0 0 1 1 1.73V20a2 2 0 0 0 2 2h.44a2 2 0 0 0 2-2v-.18a2 2 0 0 1 1-1.73l.43-.25a2 2 0 0 1 2 0l.15.08a2 2 0 0 0 2.73-.73l.22-.39a2 2 0 0 0-.73-2.73l-.15-.08a2 2 0 0 1-1-1.74v-.5a2 2 0 0 1 1-1.74l.15-.09a2 2 0 0 0 .73-2.73l-.22-.38a2 2 0 0 0-2.73-.73l-.15.08a2 2 0 0 1-2 0l-.43-.25a2 2 0 0 1-1-1.73V4a2 2 0 0 0-2-2z"/><circle cx="12" cy="12" r="3"/></svg>
<span class="t" id="t103" style="top:981.4px;font-size:12.3px;line-height:18px;color:#5a5a5a;left:38px;letter-spacing:0.221px;">Einstellungen</span>
<svg class="i" style="left:15px;top:1016.4px;" width="16" height="16" viewBox="0 0 24 24" fill="none" stroke="#5a5a5a" stroke-width="1.7" stroke-linecap="round" stroke-linejoin="round"><rect width="20" height="14" x="2" y="5" rx="2"/><line x1="2" x2="22" y1="10" y2="10"/></svg>
<span class="t" id="t104" style="top:1015.4px;font-size:12.3px;line-height:18px;color:#5a5a5a;left:38px;letter-spacing:0.464px;">Abrechnung</span>
<span class="t" id="t105" style="top:1068.5px;font-size:9.9px;line-height:15px;color:#8f8f8f;left:15.5px;letter-spacing:0.147px;-webkit-text-stroke:0.3px #8f8f8f;">INTERN</span>
<svg class="i" style="left:15px;top:1098.4px;" width="16" height="16" viewBox="0 0 24 24" fill="none" stroke="#5a5a5a" stroke-width="1.7" stroke-linecap="round" stroke-linejoin="round"><rect width="7" height="9" x="3" y="3" rx="1"/><rect width="7" height="5" x="14" y="3" rx="1"/><rect width="7" height="9" x="14" y="12" rx="1"/><rect width="7" height="5" x="3" y="16" rx="1"/></svg>
<span class="t" id="t106" style="top:1097.4px;font-size:12.3px;line-height:18px;color:#5a5a5a;left:38px;letter-spacing:0.293px;">Internes Dashboard</span>
<div class="b" style="left:8px;top:1137px;width:210px;height:1px;background:#eeeeee;"></div>
<div class="b" style="left:0px;top:1141px;width:225px;height:1px;background:#ececec;"></div>
<div class="b" style="left:10px;top:1154px;width:205.5px;height:36.5px;background:#f9fafa;border:1px solid #e6e8e8;border-radius:7px;"></div>
<svg class="i" style="left:22px;top:1165px;" width="14" height="14" viewBox="0 0 24 24" fill="none" stroke="#3a3f4a" stroke-width="1.8" stroke-linecap="round" stroke-linejoin="round"><path d="M17 17H4a2 2 0 0 1-2-2V5c0-1.5 1-2 1-2"/><path d="M22 15V5a2 2 0 0 0-2-2H9"/><path d="M8 21h8"/><path d="M12 17v4"/><path d="m2 2 20 20"/></svg>
<span class="t" id="t107" style="top:1164px;font-size:10.6px;line-height:16px;color:#2b303b;font-weight:700;left:44.5px;letter-spacing:-0.163px;">Beratungsmodus</span>
<div class="b" style="left:173.5px;top:1164px;width:30px;height:16px;background:#d4d6da;border-radius:8px;"></div>
<div class="b" style="left:175px;top:1165.5px;width:13px;height:13px;background:#fff;border-radius:7px;box-shadow:0 1px 2px rgba(0,0,0,.2);"></div>
</div>
<div class="b" style="left:0px;top:0px;width:2400px;height:1240px;background:rgba(0,0,0,0.30);"></div>
<div class="b" style="left:1200px;top:0px;width:1200px;height:1240px;background:#fff;border-left:1px solid #dedede;box-shadow:-10px 0 24px rgba(0,0,0,.15);"></div>
<div class="b" style="left:1223px;top:104px;width:218px;height:119px;background:#f4f4f5;border-radius:9px;"></div>
<div class="b" style="left:1453px;top:104px;width:218px;height:119px;background:#f4f4f5;border-radius:9px;"></div>
<svg class="i" style="left:1237.5px;top:120px;" width="14" height="14" viewBox="0 0 24 24" fill="none" stroke="#6b6b73" stroke-width="1.8" stroke-linecap="round" stroke-linejoin="round"><path d="M4 10h12"/><path d="M4 14h9"/><path d="M19 6a7.7 7.7 0 0 0-5.2-2A7.9 7.9 0 0 0 6 12c0 4.400 3.500 8 7.800 8 2 0 3.800-.8 5.200-2"/></svg>
<span class="t" id="t108" style="top:141.5px;font-size:10.2px;line-height:15px;color:#6b6b73;left:1238px;letter-spacing:-0.156px;">KAUFPREIS</span>
<span class="t" id="t109" style="top:158.5px;font-size:23.5px;line-height:35px;color:#0c0c0d;font-weight:700;left:1238px;letter-spacing:1.432px;-webkit-text-stroke:0.35px #0c0c0d;">409.000 €</span>
<span class="t" id="t110" style="top:193.5px;font-size:10.2px;line-height:15px;color:#6b6b73;left:1238px;letter-spacing:0.033px;">5.817,10 € / m²</span>
<svg class="i" style="left:1467.5px;top:120px;" width="14" height="14" viewBox="0 0 24 24" fill="none" stroke="#6b6b73" stroke-width="1.8" stroke-linecap="round" stroke-linejoin="round"><line x1="19" x2="5" y1="5" y2="19"/><circle cx="6.5" cy="6.5" r="2.5"/><circle cx="17.5" cy="17.5" r="2.5"/></svg>
<span class="t" id="t111" style="top:141.5px;font-size:10.2px;line-height:15px;color:#6b6b73;left:1468px;letter-spacing:-0.203px;">RENDITE</span>
<span class="t" id="t112" style="top:158.5px;font-size:23.5px;line-height:35px;color:#0c0c0d;font-weight:700;left:1468px;letter-spacing:0.766px;-webkit-text-stroke:0.35px #0c0c0d;">6.89 %</span>
<span class="t" id="t113" style="top:193.5px;font-size:10.2px;line-height:15px;color:#6b6b73;left:1468px;letter-spacing:0.344px;">Bruttorendite p.a.</span>
<svg class="i" style="left:1222.5px;top:246.3px;" width="12" height="12" viewBox="0 0 24 24" fill="none" stroke="#63636b" stroke-width="1.7" stroke-linecap="round" stroke-linejoin="round"><polyline points="22 7 13.5 15.5 8.5 10.5 2 17"/><polyline points="16 7 22 7 22 13"/></svg>
<span class="t" id="t114" style="top:244.8px;font-size:10.2px;line-height:15px;color:#5e5e66;font-weight:700;left:1239.6px;letter-spacing:0.731px;">MIETEINNAHMEN</span>
<span class="t" id="t115" style="top:270px;font-size:10.6px;line-height:16px;color:#5f5f66;left:1223px;letter-spacing:0.286px;">Nettokaltmiete / Monat</span>
<span class="t" id="t116" style="top:286px;font-size:12px;line-height:18px;color:#1a9b68;font-weight:700;left:1223px;letter-spacing:0.309px;">2.350,00 €</span>
<span class="t" id="t117" style="top:270px;font-size:10.6px;line-height:16px;color:#5f5f66;left:1455px;letter-spacing:0.292px;">Nettokaltmiete / Jahr</span>
<span class="t" id="t118" style="top:286px;font-size:12px;line-height:18px;color:#0c0c0d;font-weight:700;left:1455px;letter-spacing:0.259px;">28.200,00 €</span>
<span class="t" id="t119" style="top:316.3px;font-size:10.6px;line-height:16px;color:#5f5f66;left:1223px;letter-spacing:0.276px;">Miete pro m²</span>
<span class="t" id="t120" style="top:332.3px;font-size:12px;line-height:18px;color:#0c0c0d;font-weight:700;left:1223px;letter-spacing:0.242px;">33.42 €</span>
<span class="t" id="t121" style="top:316.3px;font-size:10.6px;line-height:16px;color:#5f5f66;left:1455px;letter-spacing:0.170px;">Kaufpreiseinheit (KE)</span>
<span class="t" id="t122" style="top:332.3px;font-size:12px;line-height:18px;color:#0c0c0d;font-weight:700;left:1455px;">0</span>
<svg class="i" style="left:1222.5px;top:372.3px;" width="12" height="12" viewBox="0 0 24 24" fill="none" stroke="#63636b" stroke-width="1.7" stroke-linecap="round" stroke-linejoin="round"><rect width="16" height="20" x="4" y="2" rx="2"/><line x1="8" x2="16" y1="6.500" y2="6.500"/><line x1="15.500" x2="15.500" y1="13" y2="18"/><path d="M11.500 12v6" stroke-dasharray="1.500 3"/></svg>
<span class="t" id="t123" style="top:370.8px;font-size:10.2px;line-height:15px;color:#5e5e66;font-weight:700;left:1239.6px;letter-spacing:0.609px;">INVESTITIONSRECHNUNG</span>
<div class="b" style="left:1223px;top:396.7px;width:448px;height:900px;background:#f4f4f5;border-radius:9px;"></div>
<span class="t" id="t124" style="top:415.8px;font-size:12.3px;line-height:18px;color:#5b5b62;left:1238px;letter-spacing:0.318px;">Kaufpreis</span>
<span class="t" id="t125" style="top:415.8px;font-size:12.3px;line-height:18px;color:#5b5b62;left:1576px;letter-spacing:0.744px;">409.000,00 €</span>
<span class="t" id="t126" style="top:440.7px;font-size:10.6px;line-height:16px;color:#6b6b73;left:1238px;letter-spacing:0.133px;">davon Gebäude: 347.650,00 € (85%) · Grundstück: 61.350,00 € (15%)</span>
<div class="b" style="left:1238px;top:464.2px;width:418px;height:1px;background:#eaeaed;"></div>
<svg class="i" style="left:1237.5px;top:473px;" width="12" height="12" viewBox="0 0 24 24" fill="none" stroke="#63636b" stroke-width="1.7" stroke-linecap="round" stroke-linejoin="round"><rect x="3" y="3" width="18" height="18" rx="2"/><path d="M15.5 8.500h-5a1.750 1.750 0 0 0 0 3.500h3a1.750 1.750 0 0 1 0 3.500h-5.500"/><path d="M12 6.500v11"/></svg>
<span class="t" id="t127" style="top:471.5px;font-size:10.2px;line-height:15px;color:#5e5e66;font-weight:700;left:1254.6px;letter-spacing:0.318px;">ERWERBSNEBENKOSTEN</span>
<svg class="i" style="left:1643.5px;top:472.5px;" width="13" height="13" viewBox="0 0 24 24" fill="none" stroke="#5e5e66" stroke-width="1.9" stroke-linecap="round" stroke-linejoin="round"><path d="m6 9 6 6 6-6"/></svg>
<div class="b" style="left:1238px;top:493.7px;width:418px;height:141.3px;background:#fff;border-radius:8px;"></div>
<span class="t" id="t128" style="top:509.3px;font-size:12.3px;line-height:18px;color:#7a7a80;left:1249.4px;letter-spacing:0.366px;">Grunderwerbsteuer (6.0%)</span>
<span class="t" id="t129" style="top:509.3px;font-size:12.3px;line-height:18px;color:#7a7a80;left:1573.8px;letter-spacing:0.603px;">24.540,00 €</span>
<span class="t" id="t130" style="top:535px;font-size:12.3px;line-height:18px;color:#7a7a80;left:1249.4px;letter-spacing:0.116px;">Notar (1,5%)</span>
<span class="t" id="t131" style="top:535px;font-size:12.3px;line-height:18px;color:#7a7a80;left:1585.3px;letter-spacing:0.153px;">6.135,00 €</span>
<span class="t" id="t132" style="top:560.8px;font-size:12.3px;line-height:18px;color:#7a7a80;left:1249.4px;letter-spacing:0.334px;">Grundbuch (0,5%)</span>
<span class="t" id="t133" style="top:560.8px;font-size:12.3px;line-height:18px;color:#7a7a80;left:1581.3px;letter-spacing:0.597px;">2.045,00 €</span>
<div class="b" style="left:1249.4px;top:590.4px;width:395.4px;height:1px;background:#eaeaed;"></div>
<span class="t" id="t134" style="top:602.5px;font-size:12.3px;line-height:18px;color:#0c0c0d;font-weight:700;left:1249.4px;letter-spacing:-0.004px;">Summe Nebenkosten</span>
<span class="t" id="t135" style="top:602.5px;font-size:12.3px;line-height:18px;color:#0c0c0d;font-weight:700;left:1572.8px;letter-spacing:0.703px;">32.720,00 €</span>
<div class="b" style="left:1238px;top:646.8px;width:418px;height:1px;background:#eaeaed;"></div>
<span class="t" id="t136" style="top:659.3px;font-size:12.3px;line-height:18px;color:#0c0c0d;font-weight:700;left:1238px;letter-spacing:-0.063px;">Gesamtinvestition</span>
<span class="t" id="t137" style="top:659.3px;font-size:12.3px;line-height:18px;color:#0c0c0d;font-weight:700;left:1578.3px;letter-spacing:0.535px;">441.720,00 €</span>
<div class="b" style="left:1238px;top:688.6px;width:418px;height:1px;background:#eaeaed;"></div>
<span class="t" id="t138" style="top:701px;font-size:12.3px;line-height:18px;color:#5b5b62;left:1238px;letter-spacing:0.337px;">Jahresnettomiete</span>
<span class="t" id="t139" style="top:701px;font-size:12.3px;line-height:18px;color:#5b5b62;left:1585.2px;letter-spacing:0.583px;">28.200,00 €</span>
<svg class="i" style="left:1237.5px;top:723.2px;" width="12" height="12" viewBox="0 0 24 24" fill="none" stroke="#63636b" stroke-width="1.7" stroke-linecap="round" stroke-linejoin="round"><polyline points="22 7 13.5 15.5 8.5 10.5 2 17"/><polyline points="16 7 22 7 22 13"/></svg>
<span class="t" id="t140" style="top:721.7px;font-size:10.2px;line-height:15px;color:#5e5e66;font-weight:700;left:1254.6px;letter-spacing:0.478px;">RENDITE-ÜBERSICHT</span>
<svg class="i" style="left:1643.5px;top:722.7px;" width="13" height="13" viewBox="0 0 24 24" fill="none" stroke="#5e5e66" stroke-width="1.9" stroke-linecap="round" stroke-linejoin="round"><path d="m6 9 6 6 6-6"/></svg>
<div class="b" style="left:1238px;top:743.7px;width:418px;height:99.3px;background:#fff;border-radius:8px;"></div>
<span class="t" id="t141" style="top:759px;font-size:12.3px;line-height:18px;color:#1a9b68;left:1249.4px;letter-spacing:0.334px;">Bruttorendite (Miete / Kaufpreis)</span>
<span class="t" id="t142" style="top:759px;font-size:12.3px;line-height:18px;color:#1a9b68;left:1604.8px;letter-spacing:0.341px;">6.89 %</span>
<span class="t" id="t143" style="top:784.5px;font-size:12.3px;line-height:18px;color:#5b5b62;left:1249.4px;letter-spacing:0.315px;">Nettorendite (Miete / Gesamtinvest)</span>
<span class="t" id="t144" style="top:784.5px;font-size:12.3px;line-height:18px;color:#5b5b62;left:1604.8px;letter-spacing:0.341px;">6.38 %</span>
<span class="t" id="t145" style="top:810.4px;font-size:12.3px;line-height:18px;color:#5b5b62;left:1249.4px;letter-spacing:0.346px;">Mietfaktor (Kaufpreis / Jahresmiete)</span>
<span class="t" id="t146" style="top:810.4px;font-size:12.3px;line-height:18px;color:#5b5b62;left:1615.3px;letter-spacing:-0.148px;">14.5x</span>
<div class="b" style="left:1238px;top:854.6px;width:418px;height:1px;background:#eaeaed;"></div>
<svg class="i" style="left:1237.5px;top:863.8px;" width="12" height="12" viewBox="0 0 24 24" fill="none" stroke="#63636b" stroke-width="1.7" stroke-linecap="round" stroke-linejoin="round"><path d="M15 21v-8a1 1 0 0 0-1-1h-4a1 1 0 0 0-1 1v8"/><path d="M3 10a2 2 0 0 1 .709-1.528l7-5.999a2 2 0 0 1 2.582 0l7 5.999A2 2 0 0 1 21 10v9a2 2 0 0 1-2 2H5a2 2 0 0 1-2-2z"/></svg>
<span class="t" id="t147" style="top:862.3px;font-size:10.2px;line-height:15px;color:#5e5e66;font-weight:700;left:1254.6px;letter-spacing:0.486px;">AFA-BERECHNUNG</span>
<svg class="i" style="left:1643.5px;top:863.3px;" width="13" height="13" viewBox="0 0 24 24" fill="none" stroke="#5e5e66" stroke-width="1.9" stroke-linecap="round" stroke-linejoin="round"><path d="m6 9 6 6 6-6"/></svg>
<div class="b" style="left:1238px;top:884.4px;width:418px;height:400px;background:#fff;border-radius:8px;"></div>
<span class="t" id="t148" style="top:895px;font-size:10.6px;line-height:16px;color:#6b6b73;left:1249.4px;letter-spacing:0.180px;">Bemessungsgrundlage: 347.650,00 €(85% Gebäudeanteil)</span>
<span class="t" id="t149" style="top:922px;font-size:12.3px;line-height:18px;color:#2f6be6;left:1249.4px;letter-spacing:0.341px;">Basis-AfA (2% linear)</span>
<span class="t" id="t150" style="top:922px;font-size:12.3px;line-height:18px;color:#2f6be6;left:1544.8px;letter-spacing:0.481px;">6.953,00 € / Jahr</span>
<div class="b" style="left:1249.4px;top:951.6px;width:395.4px;height:1px;background:#eaeaed;"></div>
<span class="t" id="t151" style="top:960.3px;font-size:9.9px;line-height:15px;color:#71717a;font-weight:700;left:1249.4px;letter-spacing:0.066px;">JAHRESÜBERSICHT</span>
<span class="t" id="t152" style="top:986.4px;font-size:10.6px;line-height:16px;color:#77777d;left:1249.4px;letter-spacing:0.297px;">Jahr</span>
<span class="t" id="t153" style="top:986.4px;font-size:10.6px;line-height:16px;color:#77777d;left:1402px;letter-spacing:0.023px;">Basis</span>
<span class="t" id="t154" style="top:986.4px;font-size:10.6px;line-height:16px;color:#77777d;left:1502.4px;letter-spacing:0.081px;">Gesamt</span>
<span class="t" id="t155" style="top:986.4px;font-size:10.6px;line-height:16px;color:#77777d;left:1607.6px;letter-spacing:0.276px;">Steuer*</span>
<div class="b" style="left:1249.4px;top:1006px;width:395.4px;height:1px;background:#e2e2e5;"></div>
<span class="t" id="t156" style="top:1010.1px;font-size:10.6px;line-height:16px;color:#77777d;left:1249.4px;letter-spacing:0.474px;">2026</span>
<span class="t" id="t157" style="top:1010.1px;font-size:10.6px;line-height:16px;color:#77777d;left:1375.5px;letter-spacing:0.269px;">6.953,00 €</span>
<span class="t" id="t158" style="top:1010.1px;font-size:10.6px;line-height:16px;color:#18181b;font-weight:700;left:1486.2px;letter-spacing:0.402px;">6.953,00 €</span>
<span class="t" id="t159" style="top:1010.1px;font-size:10.6px;line-height:16px;color:#1a9b68;left:1591.9px;letter-spacing:0.291px;">2.920,26 €</span>
<div class="b" style="left:1249.4px;top:1030.2px;width:395.4px;height:1px;background:#eaeaed;"></div>
<span class="t" id="t160" style="top:1034px;font-size:10.6px;line-height:16px;color:#77777d;left:1249.4px;letter-spacing:0.474px;">2027</span>
<span class="t" id="t161" style="top:1034px;font-size:10.6px;line-height:16px;color:#77777d;left:1375.5px;letter-spacing:0.269px;">6.953,00 €</span>
<span class="t" id="t162" style="top:1034px;font-size:10.6px;line-height:16px;color:#18181b;font-weight:700;left:1486.2px;letter-spacing:0.402px;">6.953,00 €</span>
<span class="t" id="t163" style="top:1034px;font-size:10.6px;line-height:16px;color:#1a9b68;left:1591.9px;letter-spacing:0.291px;">2.920,26 €</span>
<div class="b" style="left:1249.4px;top:1054.1px;width:395.4px;height:1px;background:#eaeaed;"></div>
<span class="t" id="t164" style="top:1057.9px;font-size:10.6px;line-height:16px;color:#77777d;left:1249.4px;letter-spacing:0.474px;">2028</span>
<span class="t" id="t165" style="top:1057.9px;font-size:10.6px;line-height:16px;color:#77777d;left:1375.5px;letter-spacing:0.269px;">6.953,00 €</span>
<span class="t" id="t166" style="top:1057.9px;font-size:10.6px;line-height:16px;color:#18181b;font-weight:700;left:1486.2px;letter-spacing:0.402px;">6.953,00 €</span>
<span class="t" id="t167" style="top:1057.9px;font-size:10.6px;line-height:16px;color:#1a9b68;left:1591.9px;letter-spacing:0.291px;">2.920,26 €</span>
<div class="b" style="left:1249.4px;top:1078px;width:395.4px;height:1px;background:#eaeaed;"></div>
<span class="t" id="t168" style="top:1081.8px;font-size:10.6px;line-height:16px;color:#77777d;left:1249.4px;letter-spacing:0.474px;">2029</span>
<span class="t" id="t169" style="top:1081.8px;font-size:10.6px;line-height:16px;color:#77777d;left:1375.5px;letter-spacing:0.269px;">6.953,00 €</span>
<span class="t" id="t170" style="top:1081.8px;font-size:10.6px;line-height:16px;color:#18181b;font-weight:700;left:1486.2px;letter-spacing:0.402px;">6.953,00 €</span>
<span class="t" id="t171" style="top:1081.8px;font-size:10.6px;line-height:16px;color:#1a9b68;left:1591.9px;letter-spacing:0.291px;">2.920,26 €</span>
<div class="b" style="left:1249.4px;top:1101.9px;width:395.4px;height:1px;background:#eaeaed;"></div>
<span class="t" id="t172" style="top:1105.7px;font-size:10.6px;line-height:16px;color:#77777d;left:1249.4px;letter-spacing:0.474px;">2030</span>
<span class="t" id="t173" style="top:1105.7px;font-size:10.6px;line-height:16px;color:#77777d;left:1375.5px;letter-spacing:0.269px;">6.953,00 €</span>
<span class="t" id="t174" style="top:1105.7px;font-size:10.6px;line-height:16px;color:#18181b;font-weight:700;left:1486.2px;letter-spacing:0.402px;">6.953,00 €</span>
<span class="t" id="t175" style="top:1105.7px;font-size:10.6px;line-height:16px;color:#1a9b68;left:1591.9px;letter-spacing:0.291px;">2.920,26 €</span>
<div class="b" style="left:1249.4px;top:1125.8px;width:395.4px;height:1px;background:#eaeaed;"></div>
<span class="t" id="t176" style="top:1129.6px;font-size:10.6px;line-height:16px;color:#77777d;left:1249.4px;letter-spacing:0.474px;">2031</span>
<span class="t" id="t177" style="top:1129.6px;font-size:10.6px;line-height:16px;color:#77777d;left:1375.5px;letter-spacing:0.269px;">6.953,00 €</span>
<span class="t" id="t178" style="top:1129.6px;font-size:10.6px;line-height:16px;color:#18181b;font-weight:700;left:1486.2px;letter-spacing:0.402px;">6.953,00 €</span>
<span class="t" id="t179" style="top:1129.6px;font-size:10.6px;line-height:16px;color:#1a9b68;left:1591.9px;letter-spacing:0.291px;">2.920,26 €</span>
<div class="b" style="left:1249.4px;top:1149.7px;width:395.4px;height:1px;background:#eaeaed;"></div>
<span class="t" id="t180" style="top:1153.5px;font-size:10.6px;line-height:16px;color:#77777d;left:1249.4px;letter-spacing:0.474px;">2032</span>
<span class="t" id="t181" style="top:1153.5px;font-size:10.6px;line-height:16px;color:#77777d;left:1375.5px;letter-spacing:0.269px;">6.953,00 €</span>
<span class="t" id="t182" style="top:1153.5px;font-size:10.6px;line-height:16px;color:#18181b;font-weight:700;left:1486.2px;letter-spacing:0.402px;">6.953,00 €</span>
<span class="t" id="t183" style="top:1153.5px;font-size:10.6px;line-height:16px;color:#1a9b68;left:1591.9px;letter-spacing:0.291px;">2.920,26 €</span>
<div class="b" style="left:1249.4px;top:1173.6px;width:395.4px;height:1px;background:#eaeaed;"></div>
<span class="t" id="t184" style="top:1177.4px;font-size:10.6px;line-height:16px;color:#77777d;left:1249.4px;letter-spacing:0.474px;">2033</span>
<span class="t" id="t185" style="top:1177.4px;font-size:10.6px;line-height:16px;color:#77777d;left:1375.5px;letter-spacing:0.269px;">6.953,00 €</span>
<span class="t" id="t186" style="top:1177.4px;font-size:10.6px;line-height:16px;color:#18181b;font-weight:700;left:1486.2px;letter-spacing:0.402px;">6.953,00 €</span>
<span class="t" id="t187" style="top:1177.4px;font-size:10.6px;line-height:16px;color:#1a9b68;left:1591.9px;letter-spacing:0.291px;">2.920,26 €</span>
<div class="b" style="left:1249.4px;top:1197.5px;width:395.4px;height:1px;background:#eaeaed;"></div>
<div class="b" style="left:1694px;top:104px;width:684px;height:98.5px;background:#fafafa;border:1px solid #e6e6e8;border-radius:12px;box-shadow:0 1px 3px rgba(0,0,0,.07);"></div>
<svg class="i" style="left:1707px;top:121px;" width="13" height="13" viewBox="0 0 24 24" fill="none" stroke="#55555c" stroke-width="1.9" stroke-linecap="round" stroke-linejoin="round"><path d="M20 7h-9"/><path d="M14 17H5"/><circle cx="17" cy="17" r="3"/><circle cx="7" cy="7" r="3"/></svg>
<span class="t" id="t188" style="top:120px;font-size:10px;line-height:15px;color:#55555c;left:1726.9px;letter-spacing:-0.203px;-webkit-text-stroke:0.2px #55555c;">FINANZIERUNGSPARAMETER</span>
<div class="b" style="left:2223.3px;top:116.5px;width:75.3px;height:22px;background:#fff;border:1px solid #e4e4e7;border-radius:6px;"></div>
<span class="t" id="t189" style="top:120.5px;font-size:9.5px;line-height:14px;color:#27272a;left:2235.6px;letter-spacing:0.002px;">10 Jahre</span>
<svg class="i" style="left:2284px;top:121.5px;" width="12" height="12" viewBox="0 0 24 24" fill="none" stroke="#3f3f46" stroke-width="2" stroke-linecap="round" stroke-linejoin="round"><path d="m6 9 6 6 6-6"/></svg>
<span class="t" id="t190" style="top:120px;font-size:9.7px;line-height:15px;color:#3f37a8;font-weight:700;left:2310px;letter-spacing:-0.186px;">Detailliert</span>
<svg class="i" style="left:2356.5px;top:122.5px;" width="10" height="10" viewBox="0 0 24 24" fill="none" stroke="#3f37a8" stroke-width="2.2" stroke-linecap="round" stroke-linejoin="round"><path d="M15 3h6v6"/><path d="M10 14 21 3"/><path d="M18 13v6a2 2 0 0 1-2 2H5a2 2 0 0 1-2-2V8a2 2 0 0 1 2-2h6"/></svg>
<span class="t" id="t191" style="top:147.7px;font-size:9.8px;line-height:15px;color:#5f5f66;left:1706.5px;letter-spacing:0.037px;">Eigenkapital</span>
<svg class="i" style="left:1764.8px;top:149.7px;" width="11" height="11" viewBox="0 0 24 24" fill="none" stroke="#8b8b93" stroke-width="1.7" stroke-linecap="round" stroke-linejoin="round"><circle cx="12" cy="12" r="10"/><path d="M9.09 9a3 3 0 0 1 5.83 1c0 2-3 3-3 3"/><path d="M12 17h.01"/></svg>
<span class="t" id="t192" style="top:146.8px;font-size:11.3px;line-height:17px;color:#27272a;font-weight:700;left:1830.2px;letter-spacing:0.063px;">20.0%</span>
<div class="b" style="left:1706.5px;top:178px;width:156px;height:6.5px;background:#e4e4e7;border-radius:3.5px;"></div>
<div class="b" style="left:1706.5px;top:178px;width:42px;height:6.5px;background:#3730a3;border-radius:3.5px;"></div>
<div class="b" style="left:1743px;top:175.7px;width:11px;height:11px;background:#3730a3;border-radius:6px;box-shadow:0 1px 2px rgba(0,0,0,.25);"></div>
<span class="t" id="t193" style="top:147.7px;font-size:9.8px;line-height:15px;color:#5f5f66;left:1874.2px;letter-spacing:0.102px;">Zinssatz</span>
<svg class="i" style="left:1915.9px;top:149.7px;" width="11" height="11" viewBox="0 0 24 24" fill="none" stroke="#8b8b93" stroke-width="1.7" stroke-linecap="round" stroke-linejoin="round"><circle cx="12" cy="12" r="10"/><path d="M9.09 9a3 3 0 0 1 5.83 1c0 2-3 3-3 3"/><path d="M12 17h.01"/></svg>
<span class="t" id="t194" style="top:146.8px;font-size:11.3px;line-height:17px;color:#27272a;font-weight:700;left:2004.2px;letter-spacing:0.083px;">4.0%</span>
<div class="b" style="left:1874.2px;top:178px;width:156px;height:6.5px;background:#e4e4e7;border-radius:3.5px;"></div>
<div class="b" style="left:1874.2px;top:178px;width:92.3px;height:6.5px;background:#3730a3;border-radius:3.5px;"></div>
<div class="b" style="left:1961px;top:175.7px;width:11px;height:11px;background:#3730a3;border-radius:6px;box-shadow:0 1px 2px rgba(0,0,0,.25);"></div>
<span class="t" id="t195" style="top:147.7px;font-size:9.8px;line-height:15px;color:#5f5f66;left:2042px;letter-spacing:0.153px;">Tilgung</span>
<svg class="i" style="left:2079.2px;top:149.7px;" width="11" height="11" viewBox="0 0 24 24" fill="none" stroke="#8b8b93" stroke-width="1.7" stroke-linecap="round" stroke-linejoin="round"><circle cx="12" cy="12" r="10"/><path d="M9.09 9a3 3 0 0 1 5.83 1c0 2-3 3-3 3"/><path d="M12 17h.01"/></svg>
<span class="t" id="t196" style="top:146.8px;font-size:11.3px;line-height:17px;color:#27272a;font-weight:700;left:2174.7px;letter-spacing:-0.817px;">1.5%</span>
<div class="b" style="left:2042px;top:178px;width:156px;height:6.5px;background:#e4e4e7;border-radius:3.5px;"></div>
<div class="b" style="left:2042px;top:178px;width:24px;height:6.5px;background:#3730a3;border-radius:3.5px;"></div>
<div class="b" style="left:2060.5px;top:175.7px;width:11px;height:11px;background:#3730a3;border-radius:6px;box-shadow:0 1px 2px rgba(0,0,0,.25);"></div>
<span class="t" id="t197" style="top:147.7px;font-size:9.8px;line-height:15px;color:#5f5f66;left:2209.6px;letter-spacing:0.226px;">Mietsteigerung</span>
<svg class="i" style="left:2281.3px;top:149.7px;" width="11" height="11" viewBox="0 0 24 24" fill="none" stroke="#8b8b93" stroke-width="1.7" stroke-linecap="round" stroke-linejoin="round"><circle cx="12" cy="12" r="10"/><path d="M9.09 9a3 3 0 0 1 5.83 1c0 2-3 3-3 3"/><path d="M12 17h.01"/></svg>
<span class="t" id="t198" style="top:146.8px;font-size:11.3px;line-height:17px;color:#27272a;font-weight:700;left:2318.4px;letter-spacing:-0.145px;">2.0% p.a.</span>
<div class="b" style="left:2209.6px;top:178px;width:156px;height:6.5px;background:#e4e4e7;border-radius:3.5px;"></div>
<div class="b" style="left:2209.6px;top:178px;width:63.4px;height:6.5px;background:#3730a3;border-radius:3.5px;"></div>
<div class="b" style="left:2267.5px;top:175.7px;width:11px;height:11px;background:#3730a3;border-radius:6px;box-shadow:0 1px 2px rgba(0,0,0,.25);"></div>
<div class="b" style="left:1694px;top:214.4px;width:162px;height:79.6px;background:#fff;border:1px solid #e6e6e8;border-radius:9px;box-shadow:0 1px 3px rgba(0,0,0,.07);"></div>
<span class="t" id="t199" style="top:229.4px;font-size:9.8px;line-height:15px;color:#5f5f66;left:1710.2px;letter-spacing:-0.013px;">Nach 10 Jahren</span>
<span class="t" id="t200" style="top:243.5px;font-size:13.3px;line-height:20px;color:#27272a;font-weight:700;left:1710.2px;letter-spacing:0.855px;">208.833 €</span>
<span class="t" id="t201" style="top:262.9px;font-size:9.8px;line-height:15px;color:#a1a1aa;left:1710.2px;letter-spacing:0.110px;">Nettovermögen</span>
<div class="b" style="left:1868px;top:214.4px;width:162px;height:79.6px;background:#fff;border:1px solid #e6e6e8;border-radius:9px;box-shadow:0 1px 3px rgba(0,0,0,.07);"></div>
<span class="t" id="t202" style="top:229.4px;font-size:9.8px;line-height:15px;color:#5f5f66;left:1884.2px;letter-spacing:0.190px;">Monatl. Cashflow</span>
<span class="t" id="t203" style="top:243.5px;font-size:13.3px;line-height:20px;color:#27272a;font-weight:700;left:1884.2px;letter-spacing:0.930px;">423 €</span>
<span class="t" id="t204" style="top:262.9px;font-size:9.8px;line-height:15px;color:#a1a1aa;left:1884.2px;letter-spacing:0.085px;">Überschuss</span>
<div class="b" style="left:2041.8px;top:214.4px;width:162px;height:79.6px;background:#fff;border:1px solid #e6e6e8;border-radius:9px;box-shadow:0 1px 3px rgba(0,0,0,.07);"></div>
<span class="t" id="t205" style="top:229.4px;font-size:9.8px;line-height:15px;color:#5f5f66;left:2058px;letter-spacing:-0.022px;">Getilgt (10 J.)</span>
<span class="t" id="t206" style="top:243.5px;font-size:13.3px;line-height:20px;color:#27272a;font-weight:700;left:2058px;letter-spacing:0.962px;">63.640 €</span>
<span class="t" id="t207" style="top:262.9px;font-size:9.8px;line-height:15px;color:#a1a1aa;left:2058px;letter-spacing:0.105px;">Vermögensaufbau</span>
<div class="b" style="left:2215.8px;top:214.4px;width:162px;height:79.6px;background:#fff;border:1px solid #e6e6e8;border-radius:9px;box-shadow:0 1px 3px rgba(0,0,0,.07);"></div>
<span class="t" id="t208" style="top:229.4px;font-size:9.8px;line-height:15px;color:#15803d;left:2232px;letter-spacing:-0.043px;">EK-Rendite (p.a.)</span>
<span class="t" id="t209" style="top:243.5px;font-size:13.3px;line-height:20px;color:#15803d;font-weight:700;left:2232px;letter-spacing:0.449px;">13.0%</span>
<span class="t" id="t210" style="top:262.9px;font-size:9.8px;line-height:15px;color:#34c26a;left:2232px;letter-spacing:0.001px;">Return on Equity</span>
<div class="b" style="left:1694px;top:305px;width:684px;height:278px;background:#fff;border:1px solid #e6e6e8;border-radius:12px;box-shadow:0 1px 3px rgba(0,0,0,.07);"></div>
<div class="b" style="left:1710.3px;top:317px;width:27.5px;height:27.5px;background:#f1f3f6;border-radius:6px;"></div>
<svg class="i" style="left:1716.5px;top:323.3px;" width="15" height="15" viewBox="0 0 24 24" fill="none" stroke="#1f2533" stroke-width="2.1" stroke-linecap="round" stroke-linejoin="round"><path d="M3 3v18h18"/><path d="m19 9-5 5-4-4-3 3"/></svg>
<span class="t" id="t211" style="top:315.7px;font-size:10.8px;line-height:16px;color:#161c2b;font-weight:700;left:1747.7px;letter-spacing:0.061px;">Marktwert-Entwicklung</span>
<span class="t" id="t212" style="top:330.5px;font-size:9.8px;line-height:15px;color:#71717a;left:1747.7px;letter-spacing:0.075px;">Immobilienwert vs. Restschuld</span>
<svg class="i" style="left:2343.5px;top:323.5px;" width="15" height="15" viewBox="0 0 24 24" fill="none" stroke="#8b8b93" stroke-width="1.8" stroke-linecap="round" stroke-linejoin="round"><path d="m18 15-6-6-6 6"/></svg>
<div class="b" style="left:1695px;top:356.6px;width:682px;height:1px;background:#efeff1;"></div>
<svg class="i" style="left:1694px;top:0px" width="684" height="1240" viewBox="1694 0 684 1240" font-size="9.7" fill="none"><defs><linearGradient id="gA" x1="0" y1="0" x2="0" y2="1"><stop offset="0" stop-color="#10b981" stop-opacity=".14"/><stop offset="1" stop-color="#10b981" stop-opacity=".01"/></linearGradient></defs><line x1="1742.5" x2="2352.5" y1="381.5" y2="381.5" stroke="#ececef" stroke-dasharray="3 3"/><line x1="1736.5" x2="1742.5" y1="381.5" y2="381.5" stroke="#6b7280"/><text x="1734.5" y="385.0" text-anchor="end" fill="#6b7280">600k</text><line x1="1742.5" x2="2352.5" y1="415.5" y2="415.5" stroke="#ececef" stroke-dasharray="3 3"/><line x1="1736.5" x2="1742.5" y1="415.5" y2="415.5" stroke="#6b7280"/><text x="1734.5" y="419.0" text-anchor="end" fill="#6b7280">450k</text><line x1="1742.5" x2="2352.5" y1="449.4" y2="449.4" stroke="#ececef" stroke-dasharray="3 3"/><line x1="1736.5" x2="1742.5" y1="449.4" y2="449.4" stroke="#6b7280"/><text x="1734.5" y="452.9" text-anchor="end" fill="#6b7280">300k</text><line x1="1742.5" x2="2352.5" y1="483.4" y2="483.4" stroke="#ececef" stroke-dasharray="3 3"/><line x1="1736.5" x2="1742.5" y1="483.4" y2="483.4" stroke="#6b7280"/><text x="1734.5" y="486.9" text-anchor="end" fill="#6b7280">150k</text><line x1="1736.5" x2="1742.5" y1="517.4" y2="517.4" stroke="#6b7280"/><text x="1734.5" y="520.9" text-anchor="end" fill="#6b7280">0k</text><line x1="1742.5" x2="1742.5" y1="381.5" y2="517.4" stroke="#ececef"/><line x1="1742.5" x2="2352.5" y1="517.4" y2="517.4" stroke="#ececef"/><line x1="1742.5" x2="1742.5" y1="517.4" y2="523.4" stroke="#6b7280"/><text x="1742.5" y="530.9" text-anchor="middle" fill="#6b7280">2026</text><line x1="1810.3" x2="1810.3" y1="517.4" y2="523.4" stroke="#6b7280"/><text x="1810.3" y="530.9" text-anchor="middle" fill="#6b7280">2027</text><line x1="1878.1" x2="1878.1" y1="517.4" y2="523.4" stroke="#6b7280"/><text x="1878.1" y="530.9" text-anchor="middle" fill="#6b7280">2028</text><line x1="1945.8" x2="1945.8" y1="517.4" y2="523.4" stroke="#6b7280"/><text x="1945.8" y="530.9" text-anchor="middle" fill="#6b7280">2029</text><line x1="2013.6" x2="2013.6" y1="517.4" y2="523.4" stroke="#6b7280"/><text x="2013.6" y="530.9" text-anchor="middle" fill="#6b7280">2030</text><line x1="2081.4" x2="2081.4" y1="517.4" y2="523.4" stroke="#6b7280"/><text x="2081.4" y="530.9" text-anchor="middle" fill="#6b7280">2031</text><line x1="2149.2" x2="2149.2" y1="517.4" y2="523.4" stroke="#6b7280"/><text x="2149.2" y="530.9" text-anchor="middle" fill="#6b7280">2032</text><line x1="2216.9" x2="2216.9" y1="517.4" y2="523.4" stroke="#6b7280"/><text x="2216.9" y="530.9" text-anchor="middle" fill="#6b7280">2033</text><line x1="2284.7" x2="2284.7" y1="517.4" y2="523.4" stroke="#6b7280"/><text x="2284.7" y="530.9" text-anchor="middle" fill="#6b7280">2034</text><line x1="2352.5" x2="2352.5" y1="517.4" y2="523.4" stroke="#6b7280"/><text x="2350.5" y="530.9" text-anchor="middle" fill="#6b7280">2035</text><polygon points="1742.5,422.9 1810.3,421.0 1878.1,419.1 1945.8,417.1 2013.6,415.1 2081.4,413.1 2149.2,411.0 2216.9,408.9 2284.7,406.7 2352.5,404.5 2352.5,517.4 1742.5,517.4" fill="url(#gA)"/><polyline points="1742.5,422.9 1810.3,421.0 1878.1,419.1 1945.8,417.1 2013.6,415.1 2081.4,413.1 2149.2,411.0 2216.9,408.9 2284.7,406.7 2352.5,404.5" stroke="#10b981" stroke-width="2"/><polyline points="1742.5,438.6 1810.3,439.8 1878.1,441.1 1945.8,442.5 2013.6,443.9 2081.4,445.3 2149.2,446.8 2216.9,448.4 2284.7,450.1 2352.5,451.8" stroke="#ef4444" stroke-width="2" stroke-dasharray="5 5"/></svg>
<div class="b" style="left:1952.5px;top:558.4px;width:5px;height:5px;background:#10b981;border-radius:3px;"></div>
<span class="t" id="t213" style="top:553.1px;font-size:9.7px;line-height:15px;color:#10b981;left:1961.6px;letter-spacing:0.174px;">Immobilienwert</span>
<div class="b" style="left:2037.5px;top:558.4px;width:5px;height:5px;background:#ef4444;border-radius:3px;"></div>
<span class="t" id="t214" style="top:553.1px;font-size:9.7px;line-height:15px;color:#ef4444;left:2048px;letter-spacing:0.096px;">Restschuld</span>
<div class="b" style="left:1694px;top:594.5px;width:684px;height:277.5px;background:#fff;border:1px solid #e6e6e8;border-radius:12px;box-shadow:0 1px 3px rgba(0,0,0,.07);"></div>
<div class="b" style="left:1710.3px;top:606.5px;width:27.5px;height:27.5px;background:#f1f3f6;border-radius:6px;"></div>
<svg class="i" style="left:1716.5px;top:612.8px;" width="15" height="15" viewBox="0 0 24 24" fill="none" stroke="#1f2533" stroke-width="2.1" stroke-linecap="round" stroke-linejoin="round"><polyline points="22 7 13.5 15.5 8.5 10.5 2 17"/><polyline points="16 7 22 7 22 13"/></svg>
<span class="t" id="t215" style="top:605.2px;font-size:10.8px;line-height:16px;color:#161c2b;font-weight:700;left:1747.7px;letter-spacing:-0.071px;">Vermögensentwicklung (Kumuliert)</span>
<span class="t" id="t216" style="top:620px;font-size:9.8px;line-height:15px;color:#71717a;left:1747.7px;letter-spacing:0.086px;">Tilgung, Wertsteigerung &amp; Cashflow</span>
<svg class="i" style="left:2343.5px;top:613px;" width="15" height="15" viewBox="0 0 24 24" fill="none" stroke="#8b8b93" stroke-width="1.8" stroke-linecap="round" stroke-linejoin="round"><path d="m18 15-6-6-6 6"/></svg>
<div class="b" style="left:1695px;top:646.1px;width:682px;height:1px;background:#efeff1;"></div>
<svg class="i" style="left:1694px;top:0px" width="684" height="1240" viewBox="1694 0 684 1240" font-size="9.7" fill="none"><line x1="1742.7" x2="2352.7" y1="671.2" y2="671.2" stroke="#ececef" stroke-dasharray="3 3"/><line x1="1736.7" x2="1742.7" y1="671.2" y2="671.2" stroke="#6b7280"/><text x="1734.7" y="674.7" text-anchor="end" fill="#6b7280">220k</text><line x1="1742.7" x2="2352.7" y1="705.1" y2="705.1" stroke="#ececef" stroke-dasharray="3 3"/><line x1="1736.7" x2="1742.7" y1="705.1" y2="705.1" stroke="#6b7280"/><text x="1734.7" y="708.6" text-anchor="end" fill="#6b7280">165k</text><line x1="1742.7" x2="2352.7" y1="739.0" y2="739.0" stroke="#ececef" stroke-dasharray="3 3"/><line x1="1736.7" x2="1742.7" y1="739.0" y2="739.0" stroke="#6b7280"/><text x="1734.7" y="742.5" text-anchor="end" fill="#6b7280">110k</text><line x1="1742.7" x2="2352.7" y1="772.9" y2="772.9" stroke="#ececef" stroke-dasharray="3 3"/><line x1="1736.7" x2="1742.7" y1="772.9" y2="772.9" stroke="#6b7280"/><text x="1734.7" y="776.4" text-anchor="end" fill="#6b7280">55k</text><line x1="1736.7" x2="1742.7" y1="806.8" y2="806.8" stroke="#6b7280"/><text x="1734.7" y="810.3" text-anchor="end" fill="#6b7280">0k</text><line x1="1742.7" x2="1742.7" y1="671.2" y2="806.8" stroke="#ececef"/><line x1="1742.7" x2="2352.7" y1="806.8" y2="806.8" stroke="#ececef"/><line x1="1773.2" x2="1773.2" y1="806.8" y2="812.8" stroke="#6b7280"/><text x="1773.2" y="820.9" text-anchor="middle" fill="#6b7280">2026</text><line x1="1834.2" x2="1834.2" y1="806.8" y2="812.8" stroke="#6b7280"/><text x="1834.2" y="820.9" text-anchor="middle" fill="#6b7280">2027</text><line x1="1895.2" x2="1895.2" y1="806.8" y2="812.8" stroke="#6b7280"/><text x="1895.2" y="820.9" text-anchor="middle" fill="#6b7280">2028</text><line x1="1956.2" x2="1956.2" y1="806.8" y2="812.8" stroke="#6b7280"/><text x="1956.2" y="820.9" text-anchor="middle" fill="#6b7280">2029</text><line x1="2017.2" x2="2017.2" y1="806.8" y2="812.8" stroke="#6b7280"/><text x="2017.2" y="820.9" text-anchor="middle" fill="#6b7280">2030</text><line x1="2078.2" x2="2078.2" y1="806.8" y2="812.8" stroke="#6b7280"/><text x="2078.2" y="820.9" text-anchor="middle" fill="#6b7280">2031</text><line x1="2139.2" x2="2139.2" y1="806.8" y2="812.8" stroke="#6b7280"/><text x="2139.2" y="820.9" text-anchor="middle" fill="#6b7280">2032</text><line x1="2200.2" x2="2200.2" y1="806.8" y2="812.8" stroke="#6b7280"/><text x="2200.2" y="820.9" text-anchor="middle" fill="#6b7280">2033</text><line x1="2261.2" x2="2261.2" y1="806.8" y2="812.8" stroke="#6b7280"/><text x="2261.2" y="820.9" text-anchor="middle" fill="#6b7280">2034</text><line x1="2322.2" x2="2322.2" y1="806.8" y2="812.8" stroke="#6b7280"/><text x="2322.2" y="820.9" text-anchor="middle" fill="#6b7280">2035</text><rect x="1748.8" y="803.5" width="48.800" height="3.3" fill="#f59e0b"/><rect x="1748.8" y="798.5" width="48.800" height="5.0" fill="#10b981"/><rect x="1748.8" y="795.6" width="48.800" height="2.9" fill="#3730a3"/><rect x="1809.8" y="800.1" width="48.800" height="6.7" fill="#f59e0b"/><rect x="1809.8" y="790.0" width="48.800" height="10.2" fill="#10b981"/><rect x="1809.8" y="784.0" width="48.800" height="6.0" fill="#3730a3"/><rect x="1870.8" y="796.6" width="48.800" height="10.2" fill="#f59e0b"/><rect x="1870.8" y="781.2" width="48.800" height="15.4" fill="#10b981"/><rect x="1870.8" y="772.0" width="48.800" height="9.2" fill="#3730a3"/><rect x="1931.8" y="792.9" width="48.800" height="13.9" fill="#f59e0b"/><rect x="1931.8" y="772.1" width="48.800" height="20.8" fill="#10b981"/><rect x="1931.8" y="759.6" width="48.800" height="12.6" fill="#3730a3"/><rect x="1992.8" y="789.1" width="48.800" height="17.7" fill="#f59e0b"/><rect x="1992.8" y="762.9" width="48.800" height="26.2" fill="#10b981"/><rect x="1992.8" y="746.8" width="48.800" height="16.1" fill="#3730a3"/><rect x="2053.8" y="785.1" width="48.800" height="21.7" fill="#f59e0b"/><rect x="2053.8" y="753.3" width="48.800" height="31.8" fill="#10b981"/><rect x="2053.8" y="733.5" width="48.800" height="19.8" fill="#3730a3"/><rect x="2114.8" y="781.0" width="48.800" height="25.8" fill="#f59e0b"/><rect x="2114.8" y="743.5" width="48.800" height="37.5" fill="#10b981"/><rect x="2114.8" y="719.9" width="48.800" height="23.6" fill="#3730a3"/><rect x="2175.8" y="776.7" width="48.800" height="30.1" fill="#f59e0b"/><rect x="2175.8" y="733.4" width="48.800" height="43.3" fill="#10b981"/><rect x="2175.8" y="705.8" width="48.800" height="27.6" fill="#3730a3"/><rect x="2236.8" y="772.2" width="48.800" height="34.6" fill="#f59e0b"/><rect x="2236.8" y="723.0" width="48.800" height="49.2" fill="#10b981"/><rect x="2236.8" y="691.3" width="48.800" height="31.8" fill="#3730a3"/><rect x="2297.8" y="767.6" width="48.800" height="39.2" fill="#f59e0b"/><rect x="2297.8" y="712.4" width="48.800" height="55.2" fill="#10b981"/><rect x="2297.8" y="676.3" width="48.800" height="36.1" fill="#3730a3"/><polyline points="1773.2,795.6 1834.2,784.0 1895.2,772.0 1956.2,759.6 2017.2,746.8 2078.2,733.5 2139.2,719.9 2200.2,705.8 2261.2,691.3 2322.2,676.3" stroke="#6366f1" stroke-width="2"/><circle cx="1773.2" cy="795.6" r="2.900" fill="#fff" stroke="#6366f1" stroke-width="1.800"/><circle cx="1834.2" cy="784.0" r="2.900" fill="#fff" stroke="#6366f1" stroke-width="1.800"/><circle cx="1895.2" cy="772.0" r="2.900" fill="#fff" stroke="#6366f1" stroke-width="1.800"/><circle cx="1956.2" cy="759.6" r="2.900" fill="#fff" stroke="#6366f1" stroke-width="1.800"/><circle cx="2017.2" cy="746.8" r="2.900" fill="#fff" stroke="#6366f1" stroke-width="1.800"/><circle cx="2078.2" cy="733.5" r="2.900" fill="#fff" stroke="#6366f1" stroke-width="1.800"/><circle cx="2139.2" cy="719.9" r="2.900" fill="#fff" stroke="#6366f1" stroke-width="1.800"/><circle cx="2200.2" cy="705.8" r="2.900" fill="#fff" stroke="#6366f1" stroke-width="1.800"/><circle cx="2261.2" cy="691.3" r="2.900" fill="#fff" stroke="#6366f1" stroke-width="1.800"/><circle cx="2322.2" cy="676.3" r="2.900" fill="#fff" stroke="#6366f1" stroke-width="1.800"/></svg>
<div class="b" style="left:1875.5px;top:847.4px;width:5px;height:5px;background:#f59e0b;border-radius:3px;"></div>
<span class="t" id="t217" style="top:842.1px;font-size:9.7px;line-height:15px;color:#f59e0b;left:1885.4px;letter-spacing:0.196px;">Tilgung</span>
<div class="b" style="left:1927.8px;top:847.4px;width:5px;height:5px;background:#10b981;border-radius:3px;"></div>
<span class="t" id="t218" style="top:842.1px;font-size:9.7px;line-height:15px;color:#10b981;left:1936.8px;letter-spacing:0.183px;">Wertsteigerung</span>
<div class="b" style="left:2014.9px;top:847.4px;width:5px;height:5px;background:#3730a3;border-radius:3px;"></div>
<span class="t" id="t219" style="top:842.1px;font-size:9.7px;line-height:15px;color:#3730a3;left:2023.8px;letter-spacing:0.267px;">Netto-Cashflow</span>
<div class="b" style="left:2103.3px;top:847.4px;width:5px;height:5px;background:#6366f1;border-radius:3px;"></div>
<span class="t" id="t220" style="top:842.1px;font-size:9.7px;line-height:15px;color:#6366f1;left:2112.7px;letter-spacing:0.124px;">Gesamtertrag</span>
<div class="b" style="left:1694px;top:884px;width:684px;height:247.5px;background:#fff;border:1px solid #e6e6e8;border-radius:12px;box-shadow:0 1px 3px rgba(0,0,0,.07);"></div>
<div class="b" style="left:1710.3px;top:896px;width:27.5px;height:27.5px;background:#f1f3f6;border-radius:6px;"></div>
<svg class="i" style="left:1716.5px;top:902.3px;" width="15" height="15" viewBox="0 0 24 24" fill="none" stroke="#1f2533" stroke-width="2.1" stroke-linecap="round" stroke-linejoin="round"><line x1="12" x2="12" y1="2" y2="22"/><path d="M17 5H9.5a3.5 3.5 0 0 0 0 7h5a3.5 3.5 0 0 1 0 7H6"/></svg>
<span class="t" id="t221" style="top:894.7px;font-size:10.8px;line-height:16px;color:#161c2b;font-weight:700;left:1747.7px;letter-spacing:-0.110px;">Monatliche Belastung</span>
<span class="t" id="t222" style="top:909.5px;font-size:9.8px;line-height:15px;color:#71717a;left:1747.7px;letter-spacing:0.022px;">Eigenanteil nach Steuern</span>
<svg class="i" style="left:2343.5px;top:902.5px;" width="15" height="15" viewBox="0 0 24 24" fill="none" stroke="#8b8b93" stroke-width="1.8" stroke-linecap="round" stroke-linejoin="round"><path d="m18 15-6-6-6 6"/></svg>
<div class="b" style="left:1695px;top:935.6px;width:682px;height:1px;background:#efeff1;"></div>
<svg class="i" style="left:1694px;top:0px" width="684" height="1240" viewBox="1694 0 684 1240" font-size="9.7" fill="none"><defs><linearGradient id="gB" x1="0" y1="0" x2="0" y2="1"><stop offset="0" stop-color="#3730a3" stop-opacity=".20"/><stop offset="1" stop-color="#3730a3" stop-opacity="0"/></linearGradient></defs><line x1="1747.6" x2="2352.7" y1="960.5" y2="960.5" stroke="#ececef" stroke-dasharray="3 3"/><line x1="1741.6" x2="1747.6" y1="960.5" y2="960.5" stroke="#6b7280"/><text x="1739.6" y="964.0" text-anchor="end" fill="#6b7280">-390€</text><line x1="1747.6" x2="2352.7" y1="992.2" y2="992.2" stroke="#ececef" stroke-dasharray="3 3"/><line x1="1741.6" x2="1747.6" y1="992.2" y2="992.2" stroke="#6b7280"/><text x="1739.6" y="995.7" text-anchor="end" fill="#6b7280">-455€</text><line x1="1747.6" x2="2352.7" y1="1023.9" y2="1023.9" stroke="#ececef" stroke-dasharray="3 3"/><line x1="1741.6" x2="1747.6" y1="1023.9" y2="1023.9" stroke="#6b7280"/><text x="1739.6" y="1027.3" text-anchor="end" fill="#6b7280">-520€</text><line x1="1747.6" x2="2352.7" y1="1055.5" y2="1055.5" stroke="#ececef" stroke-dasharray="3 3"/><line x1="1741.6" x2="1747.6" y1="1055.5" y2="1055.5" stroke="#6b7280"/><text x="1739.6" y="1059.0" text-anchor="end" fill="#6b7280">-585€</text><line x1="1741.6" x2="1747.6" y1="1087.2" y2="1087.2" stroke="#6b7280"/><text x="1739.6" y="1090.7" text-anchor="end" fill="#6b7280">-650€</text><line x1="1747.6" x2="1747.6" y1="960.5" y2="1087.2" stroke="#ececef"/><line x1="1747.6" x2="2352.7" y1="1087.2" y2="1087.2" stroke="#ececef"/><line x1="1747.6" x2="1747.6" y1="1087.2" y2="1093.2" stroke="#6b7280"/><text x="1747.6" y="1102.1" text-anchor="middle" fill="#6b7280">2026</text><line x1="1814.8" x2="1814.8" y1="1087.2" y2="1093.2" stroke="#6b7280"/><text x="1814.8" y="1102.1" text-anchor="middle" fill="#6b7280">2027</text><line x1="1882.1" x2="1882.1" y1="1087.2" y2="1093.2" stroke="#6b7280"/><text x="1882.1" y="1102.1" text-anchor="middle" fill="#6b7280">2028</text><line x1="1949.3" x2="1949.3" y1="1087.2" y2="1093.2" stroke="#6b7280"/><text x="1949.3" y="1102.1" text-anchor="middle" fill="#6b7280">2029</text><line x1="2016.5" x2="2016.5" y1="1087.2" y2="1093.2" stroke="#6b7280"/><text x="2016.5" y="1102.1" text-anchor="middle" fill="#6b7280">2030</text><line x1="2083.8" x2="2083.8" y1="1087.2" y2="1093.2" stroke="#6b7280"/><text x="2083.8" y="1102.1" text-anchor="middle" fill="#6b7280">2031</text><line x1="2151.0" x2="2151.0" y1="1087.2" y2="1093.2" stroke="#6b7280"/><text x="2151.0" y="1102.1" text-anchor="middle" fill="#6b7280">2032</text><line x1="2218.2" x2="2218.2" y1="1087.2" y2="1093.2" stroke="#6b7280"/><text x="2218.2" y="1102.1" text-anchor="middle" fill="#6b7280">2033</text><line x1="2285.5" x2="2285.5" y1="1087.2" y2="1093.2" stroke="#6b7280"/><text x="2285.5" y="1102.1" text-anchor="middle" fill="#6b7280">2034</text><line x1="2352.7" x2="2352.7" y1="1087.2" y2="1093.2" stroke="#6b7280"/><text x="2350.7" y="1102.1" text-anchor="middle" fill="#6b7280">2035</text><path d="M1747.6,977.1C1770.0,975.7 1792.4,974.4 1814.8,973.0C1837.2,971.6 1859.7,969.0 1882.1,969.0C1904.5,969.0 1926.9,1005.6 1949.3,1005.6C1971.7,1005.6 1994.1,1003.5 2016.5,1002.0C2038.9,1000.5 2061.4,996.8 2083.8,996.8C2106.2,996.8 2128.6,1035.5 2151.0,1035.5C2173.4,1035.5 2195.8,1032.0 2218.2,1030.3C2240.6,1028.6 2263.1,1025.5 2285.5,1025.5C2307.9,1025.5 2330.3,1045.5 2352.7,1065.5L2352.7,960.5L1747.6,960.5Z" fill="url(#gB)"/><path d="M1747.6,977.1C1770.0,975.7 1792.4,974.4 1814.8,973.0C1837.2,971.6 1859.7,969.0 1882.1,969.0C1904.5,969.0 1926.9,1005.6 1949.3,1005.6C1971.7,1005.6 1994.1,1003.5 2016.5,1002.0C2038.9,1000.5 2061.4,996.8 2083.8,996.8C2106.2,996.8 2128.6,1035.5 2151.0,1035.5C2173.4,1035.5 2195.8,1032.0 2218.2,1030.3C2240.6,1028.6 2263.1,1025.5 2285.5,1025.5C2307.9,1025.5 2330.3,1045.5 2352.7,1065.5" stroke="#3730a3" stroke-width="2"/></svg>
<div class="b" style="left:1694px;top:1143.4px;width:684px;height:60px;background:#fff;border:1px solid #e6e6e8;border-radius:12px;box-shadow:0 1px 3px rgba(0,0,0,.07);"></div>
<div class="b" style="left:1710.3px;top:1155.4px;width:27.5px;height:27.5px;background:#f1f3f6;border-radius:6px;"></div>
<svg class="i" style="left:1716.5px;top:1161.7px;" width="15" height="15" viewBox="0 0 24 24" fill="none" stroke="#1f2533" stroke-width="2.1" stroke-linecap="round" stroke-linejoin="round"><rect x="3" y="3" width="18" height="18" rx="2"/><path d="M15.5 8.500h-5a1.750 1.750 0 0 0 0 3.500h3a1.750 1.750 0 0 1 0 3.500h-5.500"/><path d="M12 6.500v11"/></svg>
<span class="t" id="t223" style="top:1154.1px;font-size:10.8px;line-height:16px;color:#161c2b;font-weight:700;left:1747.7px;letter-spacing:-0.079px;">Steuerliche Abschreibung (AfA)</span>
<span class="t" id="t224" style="top:1168.9px;font-size:9.8px;line-height:15px;color:#71717a;left:1747.7px;letter-spacing:0.012px;">Jährliche AfA-Beträge</span>
<svg class="i" style="left:2343.5px;top:1161.9px;" width="15" height="15" viewBox="0 0 24 24" fill="none" stroke="#8b8b93" stroke-width="1.8" stroke-linecap="round" stroke-linejoin="round"><path d="m6 9 6 6 6-6"/></svg>
<div class="b" style="left:1201px;top:0px;width:1199px;height:81.5px;background:#fff;border-bottom:1px solid #e6e6e8;"></div>
<span class="t" id="t225" style="top:18.9px;font-size:15.6px;line-height:23px;color:#0c0c0d;font-weight:700;left:1223.3px;letter-spacing:-0.207px;">Wohneinheit 3</span>
<div class="b" style="left:1335px;top:20px;width:39px;height:20.4px;background:#ecfdf5;border:1px solid #a7f0d0;border-radius:10.5px;"></div>
<span class="t" id="t226" style="top:22.8px;font-size:10.2px;line-height:15px;color:#12946a;font-weight:700;left:1345.25px;letter-spacing:-0.062px;">Frei</span>
<span class="t" id="t227" style="top:45.7px;font-size:11.5px;line-height:17px;color:#77777d;left:1223px;letter-spacing:0.266px;">4. Obergeschoss / links • 70.31 m² • 4 Zimmer</span>
<div class="b" style="left:2348px;top:25.4px;width:30px;height:30px;background:#f4f4f5;border-radius:7px;"></div>
<svg class="i" style="left:2356px;top:33.5px;" width="14" height="14" viewBox="0 0 24 24" fill="none" stroke="#52525b" stroke-width="1.8" stroke-linecap="round" stroke-linejoin="round"><path d="M18 6 6 18"/><path d="m6 6 12 12"/></svg>
<div class="b" style="left:1201px;top:1175px;width:1199px;height:65px;background:#fff;border-top:1px solid #e6e6e8;"></div>
<div class="b" style="left:1223px;top:1191.3px;width:572px;height:33.4px;background:#fff;border:1px solid #e4e4e7;border-radius:17px;box-shadow:0 1px 2px rgba(0,0,0,.05);"></div>
<svg class="i" style="left:1475px;top:1201px;" width="14" height="14" viewBox="0 0 24 24" fill="none" stroke="#18181b" stroke-width="2" stroke-linecap="round" stroke-linejoin="round"><path d="M15 2H6a2 2 0 0 0-2 2v16a2 2 0 0 0 2 2h12a2 2 0 0 0 2-2V7Z"/><path d="M14 2v4a2 2 0 0 0 2 2h4"/><path d="M10 9H8"/><path d="M16 13H8"/><path d="M16 17H8"/></svg>
<span class="t" id="t228" style="top:1198px;font-size:13.6px;line-height:20px;color:#111;left:1497.5px;letter-spacing:0.031px;-webkit-text-stroke:0.3px #111;">Exposé</span>
<div class="b" style="left:1806px;top:1191.3px;width:571.5px;height:33.4px;background:#2563eb;border-radius:17px;"></div>
<svg class="i" style="left:2027px;top:1201px;" width="14" height="14" viewBox="0 0 24 24" fill="none" stroke="#fff" stroke-width="2" stroke-linecap="round" stroke-linejoin="round"><path d="M20 6 9 17l-5-5"/></svg>
<span class="t" id="t229" style="top:1198.2px;font-size:13.6px;line-height:20px;color:#fff;left:2050px;letter-spacing:0.376px;-webkit-text-stroke:0.3px #fff;">Jetzt reservieren</span>
</div></body></html>
